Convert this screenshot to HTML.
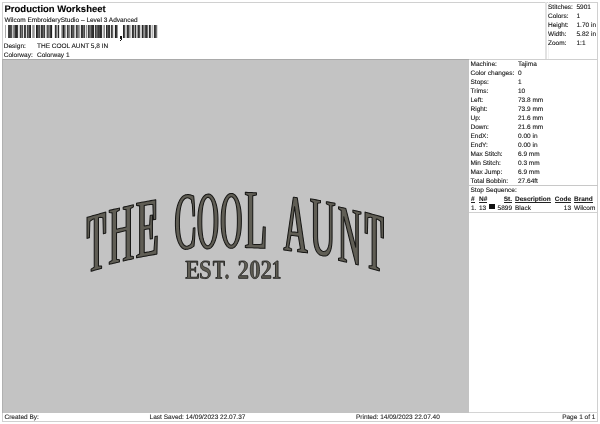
<!DOCTYPE html>
<html><head><meta charset="utf-8"><style>
html,body{margin:0;padding:0;background:#fff;width:600px;height:424px;overflow:hidden}
body{position:relative;font-family:"Liberation Sans",sans-serif;text-rendering:geometricPrecision}
.t{position:absolute;white-space:nowrap;line-height:1;-webkit-text-stroke:0.1px currentColor}
.r{position:absolute}
svg{position:absolute;left:0;top:0}
</style></head><body>
<div id="ui" style="position:absolute;left:0;top:0;width:600px;height:424px;filter:grayscale(1)">
<div class="r" style="left:2px;top:2px;width:596px;height:1px;background:#d0d0d0;"></div>
<div class="r" style="left:2px;top:2px;width:1px;height:420px;background:#d0d0d0;"></div>
<div class="r" style="left:597px;top:2px;width:1px;height:420px;background:#d0d0d0;"></div>
<div class="r" style="left:2px;top:421px;width:596px;height:1px;background:#d0d0d0;"></div>
<div class="r" style="left:545px;top:2px;width:2px;height:57px;background:#e2e2e2;"></div>
<div class="r" style="left:548px;top:2px;width:1px;height:57px;background:#f2f2f2;"></div>
<div class="r" style="left:2px;top:59px;width:467px;height:354px;background:#c3c3c3;"></div>
<div class="r" style="left:2px;top:59px;width:467px;height:1px;background:#a9a9a9;"></div>
<div class="r" style="left:2px;top:59px;width:1px;height:354px;background:#b0b0b0;"></div>
<div class="r" style="left:469px;top:59px;width:129px;height:1px;background:#cfcfcf;"></div>
<div class="t" style="left:4.50px;top:4.86px;font-size:9.5px;font-weight:bold;color:#000;">Production Worksheet</div>
<div class="t" style="left:4.40px;top:17.90px;font-size:6.5px;font-weight:normal;color:#111;">Wilcom EmbroideryStudio – Level 3 Advanced</div>
<div class="t" style="left:3.80px;top:43.70px;font-size:6.5px;font-weight:normal;color:#111;">Design:</div>
<div class="t" style="left:37.00px;top:43.70px;font-size:6.5px;font-weight:normal;color:#111;">THE COOL AUNT 5,8 IN</div>
<div class="t" style="left:3.80px;top:52.70px;font-size:6.5px;font-weight:normal;color:#111;">Colorway:</div>
<div class="t" style="left:37.00px;top:52.70px;font-size:6.5px;font-weight:normal;color:#111;">Colorway 1</div>
<div class="t" style="left:548.00px;top:4.80px;font-size:6.5px;font-weight:normal;color:#111;">Stitches:</div>
<div class="t" style="left:576.50px;top:4.80px;font-size:6.5px;font-weight:normal;color:#111;">5901</div>
<div class="t" style="left:548.00px;top:13.80px;font-size:6.5px;font-weight:normal;color:#111;">Colors:</div>
<div class="t" style="left:576.50px;top:13.80px;font-size:6.5px;font-weight:normal;color:#111;">1</div>
<div class="t" style="left:548.00px;top:22.80px;font-size:6.5px;font-weight:normal;color:#111;">Height:</div>
<div class="t" style="left:576.50px;top:22.80px;font-size:6.5px;font-weight:normal;color:#111;">1.70 in</div>
<div class="t" style="left:548.00px;top:31.80px;font-size:6.5px;font-weight:normal;color:#111;">Width:</div>
<div class="t" style="left:576.50px;top:31.80px;font-size:6.5px;font-weight:normal;color:#111;">5.82 in</div>
<div class="t" style="left:548.00px;top:40.80px;font-size:6.5px;font-weight:normal;color:#111;">Zoom:</div>
<div class="t" style="left:576.50px;top:40.80px;font-size:6.5px;font-weight:normal;color:#111;">1:1</div>
<div class="t" style="left:470.50px;top:61.70px;font-size:6.5px;font-weight:normal;color:#111;">Machine:</div>
<div class="t" style="left:518.00px;top:61.70px;font-size:6.5px;font-weight:normal;color:#111;">Tajima</div>
<div class="t" style="left:470.50px;top:70.70px;font-size:6.5px;font-weight:normal;color:#111;">Color changes:</div>
<div class="t" style="left:518.00px;top:70.70px;font-size:6.5px;font-weight:normal;color:#111;">0</div>
<div class="t" style="left:470.50px;top:79.70px;font-size:6.5px;font-weight:normal;color:#111;">Stops:</div>
<div class="t" style="left:518.00px;top:79.70px;font-size:6.5px;font-weight:normal;color:#111;">1</div>
<div class="t" style="left:470.50px;top:88.70px;font-size:6.5px;font-weight:normal;color:#111;">Trims:</div>
<div class="t" style="left:518.00px;top:88.70px;font-size:6.5px;font-weight:normal;color:#111;">10</div>
<div class="t" style="left:470.50px;top:97.70px;font-size:6.5px;font-weight:normal;color:#111;">Left:</div>
<div class="t" style="left:518.00px;top:97.70px;font-size:6.5px;font-weight:normal;color:#111;">73.8 mm</div>
<div class="t" style="left:470.50px;top:106.70px;font-size:6.5px;font-weight:normal;color:#111;">Right:</div>
<div class="t" style="left:518.00px;top:106.70px;font-size:6.5px;font-weight:normal;color:#111;">73.9 mm</div>
<div class="t" style="left:470.50px;top:115.70px;font-size:6.5px;font-weight:normal;color:#111;">Up:</div>
<div class="t" style="left:518.00px;top:115.70px;font-size:6.5px;font-weight:normal;color:#111;">21.6 mm</div>
<div class="t" style="left:470.50px;top:124.70px;font-size:6.5px;font-weight:normal;color:#111;">Down:</div>
<div class="t" style="left:518.00px;top:124.70px;font-size:6.5px;font-weight:normal;color:#111;">21.6 mm</div>
<div class="t" style="left:470.50px;top:133.70px;font-size:6.5px;font-weight:normal;color:#111;">EndX:</div>
<div class="t" style="left:518.00px;top:133.70px;font-size:6.5px;font-weight:normal;color:#111;">0.00 in</div>
<div class="t" style="left:470.50px;top:142.70px;font-size:6.5px;font-weight:normal;color:#111;">EndY:</div>
<div class="t" style="left:518.00px;top:142.70px;font-size:6.5px;font-weight:normal;color:#111;">0.00 in</div>
<div class="t" style="left:470.50px;top:151.70px;font-size:6.5px;font-weight:normal;color:#111;">Max Stitch:</div>
<div class="t" style="left:518.00px;top:151.70px;font-size:6.5px;font-weight:normal;color:#111;">6.9 mm</div>
<div class="t" style="left:470.50px;top:160.70px;font-size:6.5px;font-weight:normal;color:#111;">Min Stitch:</div>
<div class="t" style="left:518.00px;top:160.70px;font-size:6.5px;font-weight:normal;color:#111;">0.3 mm</div>
<div class="t" style="left:470.50px;top:169.70px;font-size:6.5px;font-weight:normal;color:#111;">Max Jump:</div>
<div class="t" style="left:518.00px;top:169.70px;font-size:6.5px;font-weight:normal;color:#111;">6.9 mm</div>
<div class="t" style="left:470.50px;top:178.70px;font-size:6.5px;font-weight:normal;color:#111;">Total Bobbin:</div>
<div class="t" style="left:518.00px;top:178.70px;font-size:6.5px;font-weight:normal;color:#111;">27.64ft</div>
<div class="r" style="left:469px;top:185px;width:129px;height:1px;background:#c8c8c8;"></div>
<div class="t" style="left:470.50px;top:187.90px;font-size:6.5px;font-weight:normal;color:#111;">Stop Sequence:</div>
<div class="t" style="left:471.00px;top:197.40px;font-size:6.5px;font-weight:bold;color:#222;height:4.90px;border-bottom:0.9px solid #222;">#</div>
<div class="t" style="left:479.00px;top:197.40px;font-size:6.5px;font-weight:bold;color:#222;height:4.90px;border-bottom:0.9px solid #222;">N#</div>
<div class="t" style="right:88.00px;top:197.40px;font-size:6.5px;font-weight:bold;color:#222;height:4.90px;border-bottom:0.9px solid #222;">St.</div>
<div class="t" style="left:515.00px;top:197.40px;font-size:6.5px;font-weight:bold;color:#222;height:4.90px;border-bottom:0.9px solid #222;">Description</div>
<div class="t" style="right:29.00px;top:197.40px;font-size:6.5px;font-weight:bold;color:#222;height:4.90px;border-bottom:0.9px solid #222;">Code</div>
<div class="t" style="left:574.00px;top:197.40px;font-size:6.5px;font-weight:bold;color:#222;height:4.90px;border-bottom:0.9px solid #222;">Brand</div>
<div class="t" style="left:471.00px;top:205.90px;font-size:6.5px;font-weight:normal;color:#111;">1.</div>
<div class="t" style="left:479.00px;top:205.90px;font-size:6.5px;font-weight:normal;color:#111;">13</div>
<div class="r" style="left:489px;top:204px;width:6px;height:5px;background:#111;"></div>
<div class="t" style="right:88.00px;top:205.90px;font-size:6.5px;font-weight:normal;color:#111;">5899</div>
<div class="t" style="left:515.00px;top:205.90px;font-size:6.5px;font-weight:normal;color:#111;">Black</div>
<div class="t" style="right:29.00px;top:205.90px;font-size:6.5px;font-weight:normal;color:#111;">13</div>
<div class="t" style="left:574.00px;top:205.90px;font-size:6.5px;font-weight:normal;color:#111;">Wilcom</div>
<div class="r" style="left:469px;top:212px;width:129px;height:1px;background:#d0d0d0;"></div>
<div class="r" style="left:469px;top:412px;width:129px;height:1px;background:#d4d4d4;"></div>
<div class="t" style="left:4.50px;top:414.90px;font-size:6.5px;font-weight:normal;color:#222;">Created By:</div>
<div class="t" style="left:149.60px;top:414.90px;font-size:6.5px;font-weight:normal;color:#222;">Last Saved: 14/09/2023 22.07.37</div>
<div class="t" style="left:356.00px;top:414.90px;font-size:6.5px;font-weight:normal;color:#222;">Printed: 14/09/2023 22.07.40</div>
<div class="t" style="right:4.60px;top:414.90px;font-size:6.5px;font-weight:normal;color:#222;">Page 1 of 1</div>
<svg width="600" height="60" style="position:absolute;left:0;top:0" shape-rendering="crispEdges"><rect x="5" y="25" width="1" height="13" fill="#aaaaaa"/><rect x="8" y="25" width="1" height="13" fill="#464646"/><rect x="9" y="25" width="1" height="13" fill="#3c3c3c"/><rect x="10" y="25" width="1" height="13" fill="#464646"/><rect x="11" y="25" width="1" height="13" fill="#505050"/><rect x="12" y="25" width="1" height="13" fill="#c8c8c8"/><rect x="13" y="25" width="1" height="13" fill="#8c8c8c"/><rect x="14" y="25" width="1" height="13" fill="#787878"/><rect x="15" y="25" width="1" height="13" fill="#323232"/><rect x="16" y="25" width="1" height="13" fill="#282828"/><rect x="17" y="25" width="1" height="13" fill="#3c3c3c"/><rect x="18" y="25" width="1" height="13" fill="#e6e6e6"/><rect x="19" y="25" width="1" height="13" fill="#c8c8c8"/><rect x="20" y="25" width="1" height="13" fill="#3c3c3c"/><rect x="21" y="25" width="1" height="13" fill="#787878"/><rect x="22" y="25" width="1" height="13" fill="#505050"/><rect x="23" y="25" width="1" height="13" fill="#e6e6e6"/><rect x="24" y="25" width="1" height="13" fill="#3c3c3c"/><rect x="25" y="25" width="1" height="13" fill="#464646"/><rect x="26" y="25" width="1" height="13" fill="#dcdcdc"/><rect x="27" y="25" width="1" height="13" fill="#464646"/><rect x="28" y="25" width="1" height="13" fill="#6e6e6e"/><rect x="29" y="25" width="1" height="13" fill="#3c3c3c"/><rect x="30" y="25" width="1" height="13" fill="#1e1e1e"/><rect x="32" y="25" width="1" height="13" fill="#aaaaaa"/><rect x="33" y="25" width="1" height="13" fill="#969696"/><rect x="34" y="25" width="1" height="13" fill="#b4b4b4"/><rect x="36" y="25" width="1" height="13" fill="#1e1e1e"/><rect x="37" y="25" width="1" height="13" fill="#3c3c3c"/><rect x="38" y="25" width="1" height="13" fill="#646464"/><rect x="39" y="25" width="1" height="13" fill="#505050"/><rect x="40" y="25" width="1" height="13" fill="#c8c8c8"/><rect x="41" y="25" width="1" height="13" fill="#323232"/><rect x="42" y="25" width="1" height="13" fill="#464646"/><rect x="43" y="25" width="1" height="13" fill="#6e6e6e"/><rect x="44" y="25" width="1" height="13" fill="#3c3c3c"/><rect x="45" y="25" width="1" height="13" fill="#e6e6e6"/><rect x="46" y="25" width="1" height="13" fill="#b4b4b4"/><rect x="47" y="25" width="1" height="13" fill="#505050"/><rect x="48" y="25" width="1" height="13" fill="#6e6e6e"/><rect x="49" y="25" width="1" height="13" fill="#828282"/><rect x="50" y="25" width="1" height="13" fill="#3c3c3c"/><rect x="51" y="25" width="1" height="13" fill="#1e1e1e"/><rect x="52" y="25" width="1" height="13" fill="#e6e6e6"/><rect x="54" y="25" width="1" height="13" fill="#dcdcdc"/><rect x="55" y="25" width="1" height="13" fill="#323232"/><rect x="56" y="25" width="1" height="13" fill="#787878"/><rect x="57" y="25" width="1" height="13" fill="#b4b4b4"/><rect x="58" y="25" width="1" height="13" fill="#282828"/><rect x="59" y="25" width="1" height="13" fill="#dcdcdc"/><rect x="61" y="25" width="1" height="13" fill="#aaaaaa"/><rect x="62" y="25" width="1" height="13" fill="#787878"/><rect x="63" y="25" width="1" height="13" fill="#1e1e1e"/><rect x="64" y="25" width="1" height="13" fill="#646464"/><rect x="65" y="25" width="1" height="13" fill="#a0a0a0"/><rect x="66" y="25" width="1" height="13" fill="#e6e6e6"/><rect x="67" y="25" width="1" height="13" fill="#3c3c3c"/><rect x="68" y="25" width="1" height="13" fill="#6e6e6e"/><rect x="69" y="25" width="1" height="13" fill="#828282"/><rect x="70" y="25" width="1" height="13" fill="#dcdcdc"/><rect x="71" y="25" width="1" height="13" fill="#282828"/><rect x="72" y="25" width="1" height="13" fill="#5a5a5a"/><rect x="73" y="25" width="1" height="13" fill="#505050"/><rect x="74" y="25" width="1" height="13" fill="#aaaaaa"/><rect x="75" y="25" width="1" height="13" fill="#dcdcdc"/><rect x="76" y="25" width="1" height="13" fill="#3c3c3c"/><rect x="77" y="25" width="1" height="13" fill="#646464"/><rect x="78" y="25" width="1" height="13" fill="#828282"/><rect x="79" y="25" width="1" height="13" fill="#a0a0a0"/><rect x="80" y="25" width="1" height="13" fill="#e6e6e6"/><rect x="81" y="25" width="1" height="13" fill="#323232"/><rect x="82" y="25" width="1" height="13" fill="#3c3c3c"/><rect x="83" y="25" width="1" height="13" fill="#6e6e6e"/><rect x="84" y="25" width="1" height="13" fill="#464646"/><rect x="85" y="25" width="1" height="13" fill="#e6e6e6"/><rect x="86" y="25" width="1" height="13" fill="#8c8c8c"/><rect x="87" y="25" width="1" height="13" fill="#dcdcdc"/><rect x="88" y="25" width="1" height="13" fill="#3c3c3c"/><rect x="89" y="25" width="1" height="13" fill="#646464"/><rect x="90" y="25" width="1" height="13" fill="#787878"/><rect x="91" y="25" width="1" height="13" fill="#464646"/><rect x="92" y="25" width="1" height="13" fill="#323232"/><rect x="93" y="25" width="1" height="13" fill="#282828"/><rect x="94" y="25" width="1" height="13" fill="#e6e6e6"/><rect x="95" y="25" width="1" height="13" fill="#3c3c3c"/><rect x="96" y="25" width="1" height="13" fill="#6e6e6e"/><rect x="97" y="25" width="1" height="13" fill="#5a5a5a"/><rect x="98" y="25" width="1" height="13" fill="#3c3c3c"/><rect x="99" y="25" width="1" height="13" fill="#464646"/><rect x="100" y="25" width="1" height="13" fill="#282828"/><rect x="101" y="25" width="1" height="13" fill="#323232"/><rect x="102" y="25" width="1" height="13" fill="#e6e6e6"/><rect x="103" y="25" width="1" height="13" fill="#b4b4b4"/><rect x="104" y="25" width="1" height="13" fill="#8c8c8c"/><rect x="106" y="25" width="1" height="13" fill="#282828"/><rect x="107" y="25" width="1" height="13" fill="#646464"/><rect x="108" y="25" width="1" height="13" fill="#3c3c3c"/><rect x="109" y="25" width="1" height="13" fill="#323232"/><rect x="110" y="25" width="1" height="13" fill="#e6e6e6"/><rect x="111" y="25" width="1" height="13" fill="#3c3c3c"/><rect x="112" y="25" width="1" height="13" fill="#646464"/><rect x="113" y="25" width="1" height="13" fill="#dcdcdc"/><rect x="114" y="25" width="1" height="13" fill="#e6e6e6"/><rect x="115" y="25" width="1" height="13" fill="#1e1e1e"/><rect x="116" y="25" width="1" height="13" fill="#3c3c3c"/><rect x="117" y="25" width="1" height="13" fill="#969696"/><rect x="123" y="25" width="1" height="13" fill="#282828"/><rect x="124" y="25" width="1" height="13" fill="#505050"/><rect x="125" y="25" width="1" height="13" fill="#c8c8c8"/><rect x="126" y="25" width="1" height="13" fill="#bebebe"/><rect x="127" y="25" width="1" height="13" fill="#323232"/><rect x="128" y="25" width="1" height="13" fill="#464646"/><rect x="129" y="25" width="1" height="13" fill="#969696"/><rect x="130" y="25" width="1" height="13" fill="#bebebe"/><rect x="131" y="25" width="1" height="13" fill="#e6e6e6"/><rect x="132" y="25" width="1" height="13" fill="#323232"/><rect x="133" y="25" width="1" height="13" fill="#464646"/><rect x="134" y="25" width="1" height="13" fill="#aaaaaa"/><rect x="135" y="25" width="1" height="13" fill="#323232"/><rect x="136" y="25" width="1" height="13" fill="#c8c8c8"/><rect x="137" y="25" width="1" height="13" fill="#969696"/><rect x="138" y="25" width="1" height="13" fill="#323232"/><rect x="139" y="25" width="1" height="13" fill="#505050"/><rect x="140" y="25" width="1" height="13" fill="#d2d2d2"/><rect x="141" y="25" width="1" height="13" fill="#c8c8c8"/><rect x="142" y="25" width="1" height="13" fill="#282828"/><rect x="143" y="25" width="1" height="13" fill="#787878"/><rect x="144" y="25" width="1" height="13" fill="#969696"/><rect x="145" y="25" width="1" height="13" fill="#464646"/><rect x="146" y="25" width="1" height="13" fill="#323232"/><rect x="147" y="25" width="1" height="13" fill="#6e6e6e"/><rect x="148" y="25" width="1" height="13" fill="#dcdcdc"/><rect x="149" y="25" width="1" height="13" fill="#282828"/><rect x="150" y="25" width="1" height="13" fill="#5a5a5a"/><rect x="151" y="25" width="1" height="13" fill="#dcdcdc"/><rect x="152" y="25" width="1" height="13" fill="#b4b4b4"/><rect x="153" y="25" width="1" height="13" fill="#e6e6e6"/><rect x="154" y="25" width="1" height="13" fill="#323232"/><rect x="155" y="25" width="1" height="13" fill="#464646"/><rect x="156" y="25" width="1" height="13" fill="#787878"/><rect x="157" y="25" width="1" height="13" fill="#dcdcdc"/><path d="M120.2,36.2 L122.2,36.2 L122.2,38.6 L120.8,41 L120.2,40.6 L120.9,38.8 L120.2,38.8 Z" fill="#111"/></svg>
</div>
<svg width="600" height="424" viewBox="0 0 600 424"><path d="M91.11,269.10L91.11,270.18L91.11,271.27L91.46,271.17L91.81,271.07L92.16,270.97L92.51,270.88L94.44,270.33L96.36,269.79L98.29,269.24L100.21,268.70L100.56,268.60L100.91,268.50L101.26,268.40L101.61,268.30L101.61,267.21L101.61,266.12L100.05,266.01L98.48,265.90L98.48,264.81L98.48,263.71L98.48,262.62L98.48,261.52L98.48,260.43L98.48,259.34L98.48,258.24L98.48,257.15L98.48,256.05L98.48,254.96L98.48,253.87L98.48,252.77L98.48,251.68L98.48,250.58L98.48,249.49L98.48,248.39L98.48,247.30L98.48,246.21L98.48,245.11L98.48,244.02L98.48,242.92L98.48,241.83L98.48,240.73L98.48,239.64L98.48,238.55L98.48,237.45L98.48,236.36L98.48,235.26L98.48,234.17L98.48,233.08L98.48,231.98L98.48,230.89L98.48,229.79L98.48,228.70L98.48,227.60L98.48,226.51L98.48,225.42L98.48,224.32L98.48,223.23L98.48,222.13L98.48,221.04L98.48,219.95L98.48,218.85L98.48,217.76L98.50,217.75L98.84,217.67L99.17,217.59L99.50,217.52L99.82,217.45L100.14,217.39L100.45,217.34L100.75,217.55L101.05,217.54L101.34,217.55L101.60,217.56L101.85,217.58L102.07,217.61L102.28,217.64L102.46,217.69L102.62,217.74L102.76,217.80L102.88,217.87L102.98,217.95L103.00,219.00L103.03,220.05L103.06,221.10L103.08,222.16L103.11,223.21L103.14,224.26L103.16,225.31L103.19,226.36L103.22,227.42L103.24,228.47L103.27,229.52L103.30,230.57L103.32,231.62L103.35,232.68L103.38,233.73L103.73,233.63L104.08,233.53L104.37,233.44L104.43,233.43L104.72,233.35L104.78,233.33L105.07,233.25L105.42,233.15L105.77,233.05L105.77,232.00L105.77,230.95L105.77,229.90L105.77,228.85L105.77,227.80L105.77,226.75L105.77,225.71L105.77,224.66L105.77,223.61L105.77,222.56L105.77,221.51L105.77,220.46L105.77,219.41L105.77,218.36L105.77,217.31L105.77,216.27L105.77,215.22L105.77,214.17L105.77,213.12L105.77,212.07L105.42,212.17L105.07,212.27L104.72,212.37L104.37,212.47L102.38,213.03L100.39,213.60L98.39,214.16L96.40,214.72L94.41,215.29L92.41,215.85L90.42,216.42L88.42,216.98L88.07,217.08L87.72,217.18L87.38,217.28L87.02,217.38L87.02,218.43L87.02,219.48L87.02,220.53L87.02,221.57L87.02,222.62L87.02,223.67L87.02,224.72L87.02,225.77L87.02,226.82L87.02,227.87L87.02,228.92L87.02,229.97L87.02,231.01L87.02,232.06L87.02,233.11L87.02,234.16L87.02,235.21L87.02,236.26L87.02,237.31L87.02,238.36L87.38,238.26L87.72,238.16L88.01,238.08L88.07,238.06L88.36,237.98L88.42,237.96L88.71,237.88L89.06,237.78L89.41,237.68L89.44,236.61L89.46,235.55L89.49,234.48L89.52,233.41L89.54,232.35L89.57,231.28L89.60,230.21L89.62,229.15L89.65,228.08L89.67,227.01L89.70,225.95L89.73,224.88L89.75,223.81L89.78,222.74L89.81,221.68L90.10,221.30L90.45,220.95L90.84,220.61L91.28,220.29L91.76,219.98L92.29,219.55L92.87,219.33L93.50,219.11L94.17,218.89L94.24,218.87L94.24,219.97L94.24,221.07L94.24,222.16L94.24,223.26L94.24,224.35L94.24,225.45L94.24,226.55L94.24,227.64L94.24,228.74L94.24,229.83L94.24,230.93L94.24,232.03L94.24,233.12L94.24,234.22L94.24,235.31L94.24,236.41L94.24,237.51L94.24,238.60L94.24,239.70L94.24,240.80L94.24,241.89L94.24,242.99L94.24,244.08L94.24,245.18L94.24,246.28L94.24,247.37L94.24,248.47L94.24,249.56L94.24,250.66L94.24,251.76L94.24,252.85L94.24,253.95L94.24,255.04L94.24,256.14L94.24,257.24L94.24,258.33L94.24,259.43L94.24,260.52L94.24,261.62L94.24,262.72L94.24,263.81L94.24,264.91L94.24,266.01L94.24,267.10L92.68,268.10ZM109.23,212.51L110.68,212.70L112.14,212.88L112.14,213.94L112.14,214.99L112.14,216.05L112.14,217.10L112.14,218.16L112.14,219.21L112.14,220.27L112.14,221.33L112.14,222.38L112.14,223.44L112.14,224.49L112.14,225.55L112.14,226.60L112.14,227.66L112.14,228.72L112.14,229.77L112.14,230.83L112.14,231.88L112.14,232.94L112.14,234.00L112.14,235.05L112.14,236.11L112.14,237.16L112.14,238.22L112.14,239.27L112.14,240.33L112.14,241.39L112.14,242.44L112.14,243.50L112.14,244.55L112.14,245.61L112.14,246.66L112.14,247.72L112.14,248.78L112.14,249.83L112.14,250.89L112.14,251.94L112.14,253.00L112.14,254.05L112.14,255.11L112.14,256.17L112.14,257.22L112.14,258.28L112.14,259.33L112.14,260.39L110.68,261.27L109.23,262.15L109.23,263.22L109.23,264.28L109.50,264.22L109.78,264.15L110.05,264.09L110.33,264.03L111.93,263.65L113.53,263.28L115.13,262.91L116.73,262.54L118.33,262.17L118.60,262.10L118.88,262.04L119.15,261.97L119.43,261.91L119.43,260.85L119.43,259.78L117.97,259.58L116.51,259.37L116.51,258.31L116.51,257.25L116.51,256.19L116.51,255.13L116.51,254.07L116.51,253.01L116.51,251.94L116.51,250.88L116.51,249.82L116.51,248.76L116.51,247.70L116.51,246.64L116.51,245.58L116.51,244.52L116.51,243.46L116.51,242.39L116.51,241.33L116.51,240.27L116.51,239.21L116.51,238.15L116.51,237.09L116.51,236.03L116.51,234.97L116.51,233.91L116.51,232.84L118.43,232.40L120.35,231.95L122.27,231.51L124.19,231.06L126.11,230.61L126.11,231.68L126.11,232.74L126.11,233.80L126.11,234.86L126.11,235.92L126.11,236.98L126.11,238.04L126.11,239.10L126.11,240.16L126.11,241.23L126.11,242.29L126.11,243.35L126.11,244.41L126.11,245.47L126.11,246.53L126.11,247.59L126.11,248.65L126.11,249.71L126.11,250.78L126.11,251.84L126.11,252.90L126.11,253.96L126.11,255.02L126.11,256.08L126.11,257.14L124.65,258.02L123.19,258.91L123.19,259.97L123.19,261.04L123.47,260.97L123.74,260.91L124.02,260.84L124.29,260.78L126.29,260.32L128.28,259.85L130.28,259.39L132.28,258.92L132.55,258.86L132.83,258.80L133.10,258.73L133.38,258.67L133.38,257.60L133.38,256.54L131.92,256.33L130.46,256.13L130.46,255.07L130.46,254.02L130.46,252.96L130.46,251.91L130.46,250.85L130.46,249.80L130.46,248.74L130.46,247.68L130.46,246.63L130.46,245.57L130.46,244.52L130.46,243.46L130.46,242.41L130.46,241.35L130.46,240.29L130.46,239.24L130.46,238.18L130.46,237.13L130.46,236.07L130.46,235.01L130.46,233.96L130.46,232.90L130.46,231.85L130.46,230.79L130.46,229.74L130.46,228.68L130.46,227.62L130.46,226.57L130.46,225.51L130.46,224.46L130.46,223.40L130.46,222.35L130.46,221.29L130.46,220.23L130.46,219.18L130.46,218.12L130.46,217.07L130.46,216.01L130.46,214.96L130.46,213.90L130.46,212.84L130.46,211.79L130.46,210.73L130.46,209.68L130.46,208.62L131.92,207.76L133.38,206.90L133.38,205.83L133.38,204.77L133.10,204.83L132.83,204.90L132.55,204.96L132.28,205.02L130.28,205.49L128.28,205.95L126.29,206.42L124.29,206.88L124.02,206.94L123.74,207.01L123.47,207.07L123.19,207.14L123.19,208.20L123.19,209.27L124.65,209.45L126.11,209.63L126.11,210.65L126.11,211.68L126.11,212.70L126.11,213.72L126.11,214.74L126.11,215.76L126.11,216.78L126.11,217.80L126.11,218.83L126.11,219.85L126.11,220.87L126.11,221.89L126.11,222.91L126.11,223.93L126.11,224.95L126.11,225.98L126.11,227.00L124.19,227.44L122.27,227.89L120.35,228.34L118.43,228.78L116.51,229.23L116.51,228.21L116.51,227.18L116.51,226.16L116.51,225.14L116.51,224.12L116.51,223.10L116.51,222.08L116.51,221.06L116.51,220.03L116.51,219.01L116.51,217.99L116.51,216.97L116.51,215.95L116.51,214.93L116.51,213.91L116.51,212.89L116.51,211.86L117.97,211.00L119.43,210.14L119.43,209.08L119.43,208.01L119.15,208.07L118.88,208.14L118.60,208.20L118.33,208.27L116.73,208.64L115.13,209.01L113.53,209.38L111.93,209.75L110.33,210.13L110.05,210.19L109.78,210.25L109.50,210.32L109.23,210.38L109.23,211.45ZM136.52,205.37L138.08,205.62L139.63,205.87L139.63,206.94L139.63,208.00L139.63,209.07L139.63,210.14L139.63,211.21L139.63,212.28L139.63,213.35L139.63,214.42L139.63,215.48L139.63,216.55L139.63,217.62L139.63,218.69L139.63,219.76L139.63,220.83L139.63,221.89L139.63,222.96L139.63,224.03L139.63,225.10L139.63,226.17L139.63,227.24L139.63,228.31L139.63,229.37L139.63,230.44L139.63,231.51L139.63,232.58L139.63,233.65L139.63,234.72L139.63,235.79L139.63,236.85L139.63,237.92L139.63,238.99L139.63,240.06L139.63,241.13L139.63,242.20L139.63,243.26L139.63,244.33L139.63,245.40L139.63,246.47L139.63,247.54L139.63,248.61L139.63,249.68L139.63,250.74L139.63,251.81L139.63,252.88L139.63,253.95L138.08,254.78L136.52,255.61L136.52,256.68L136.52,257.76L136.80,257.71L137.07,257.66L137.35,257.61L137.62,257.56L139.45,257.24L141.27,256.91L143.09,256.58L144.91,256.25L146.73,255.92L148.55,255.60L150.37,255.27L152.19,254.94L154.01,254.61L155.83,254.28L156.11,254.23L156.38,254.18L156.66,254.13L156.93,254.09L156.95,253.03L156.97,251.97L156.99,250.92L157.01,249.86L157.03,248.80L157.05,247.75L157.07,246.69L157.09,245.63L157.11,244.58L157.13,243.52L157.15,242.46L157.17,241.41L157.19,240.35L157.21,239.29L157.23,238.24L157.25,237.18L157.28,236.12L157.00,236.17L156.73,236.22L156.45,236.27L156.18,236.32L156.09,236.34L155.81,236.39L155.54,236.44L155.26,236.49L154.99,236.54L154.91,237.60L154.83,238.66L154.75,239.72L154.67,240.77L154.59,241.83L154.51,242.89L154.43,243.95L154.35,245.01L154.27,246.07L154.19,247.13L154.12,248.19L154.04,249.25L153.96,250.31L153.64,250.49L153.25,250.67L152.80,250.85L152.29,251.03L151.71,251.20L151.07,251.38L150.37,251.55L149.60,251.72L148.76,251.89L147.86,252.06L146.03,252.39L144.21,252.72L144.21,251.67L144.21,250.62L144.21,249.57L144.21,248.52L144.21,247.48L144.21,246.43L144.21,245.38L144.21,244.33L144.21,243.28L144.21,242.23L144.21,241.19L144.21,240.14L144.21,239.09L144.21,238.04L144.21,236.99L144.21,235.94L144.21,234.89L144.21,233.85L144.21,232.80L144.21,231.75L144.21,230.70L144.21,229.65L146.01,229.33L147.82,229.00L149.63,228.68L149.69,229.71L149.74,230.75L149.80,231.78L149.85,232.82L149.91,233.85L149.97,234.89L150.02,235.92L150.08,236.96L150.13,237.99L150.19,239.03L150.46,238.98L150.74,238.93L151.01,238.88L151.29,238.83L151.34,238.82L151.62,238.77L151.89,238.72L152.17,238.67L152.44,238.62L152.44,237.55L152.44,236.48L152.44,235.41L152.44,234.33L152.44,233.26L152.44,232.19L152.44,231.12L152.44,230.04L152.44,228.97L152.44,227.90L152.44,226.83L152.44,225.75L152.44,224.68L152.44,223.61L152.44,222.54L152.44,221.46L152.44,220.39L152.44,219.32L152.44,218.25L152.44,217.17L152.44,216.10L152.44,215.03L152.17,215.08L151.89,215.13L151.62,215.18L151.34,215.23L151.29,215.24L151.01,215.29L150.74,215.34L150.46,215.39L150.19,215.44L150.13,216.50L150.07,217.56L150.00,218.63L149.94,219.69L149.88,220.76L149.82,221.82L149.76,222.89L149.69,223.95L149.63,225.01L147.82,225.34L146.01,225.67L144.21,225.99L144.21,224.91L144.21,223.83L144.21,222.75L144.21,221.68L144.21,220.60L144.21,219.52L144.21,218.44L144.21,217.36L144.21,216.28L144.21,215.20L144.21,214.12L144.21,213.04L144.21,211.96L144.21,210.89L144.21,209.81L144.21,208.73L144.21,207.65L144.21,206.57L144.21,205.49L145.63,205.23L147.05,204.98L147.80,204.85L148.51,204.74L149.18,204.64L149.82,204.57L150.42,204.51L150.99,204.47L151.52,204.45L152.01,204.45L152.47,204.47L152.89,204.58L152.94,205.66L152.98,206.75L153.02,207.83L153.06,208.91L153.10,209.99L153.14,211.07L153.18,212.15L153.22,213.24L153.26,214.32L153.31,215.40L153.35,216.48L153.39,217.56L153.43,218.64L153.47,219.73L153.75,219.68L154.02,219.63L154.30,219.58L154.57,219.53L154.66,219.51L154.94,219.46L155.21,219.41L155.49,219.36L155.76,219.31L155.76,218.23L155.76,217.14L155.76,216.05L155.76,214.96L155.76,213.88L155.76,212.79L155.76,211.70L155.76,210.62L155.76,209.53L155.76,208.44L155.76,207.36L155.76,206.27L155.76,205.18L155.76,204.09L155.76,203.01L155.76,201.92L155.76,200.83L155.76,199.75L155.49,199.80L155.21,199.85L154.94,199.89L154.66,199.94L152.77,200.29L150.87,200.63L148.98,200.97L147.09,201.31L145.20,201.65L143.30,201.99L141.41,202.33L139.52,202.67L137.62,203.01L137.35,203.06L137.07,203.11L136.80,203.16L136.52,203.21L136.52,204.29ZM185.54,194.85L184.63,195.16L183.76,195.60L182.92,196.18L182.12,196.89L181.35,197.75L180.61,198.74L180.26,199.31L179.90,199.87L179.57,200.50L179.23,201.14L178.92,201.84L178.60,202.54L178.31,203.31L178.01,204.08L177.75,204.91L177.48,205.75L177.24,206.64L177.00,207.54L176.78,208.50L176.57,209.46L176.39,210.49L176.22,211.51L176.07,212.60L175.92,213.69L175.85,214.45L175.77,215.22L175.70,215.99L175.65,216.80L175.60,217.61L175.54,218.42L175.51,219.27L175.48,220.12L175.45,220.98L175.44,221.87L175.43,222.77L175.43,223.66L175.43,224.49L175.45,225.31L175.46,226.14L175.49,226.93L175.52,227.72L175.55,228.50L175.61,229.25L175.66,230.00L175.72,230.75L175.83,231.81L175.95,232.87L176.10,233.87L176.25,234.87L176.43,235.81L176.62,236.75L176.84,237.63L177.05,238.51L177.30,239.33L177.55,240.15L177.83,240.92L178.10,241.68L178.41,242.38L178.71,243.08L179.03,243.72L179.36,244.35L179.70,244.92L180.04,245.48L180.39,245.98L180.74,246.47L181.48,247.31L182.23,248.01L183.01,248.56L183.82,248.97L184.66,249.24L185.53,249.36L186.44,249.34L186.53,249.32L186.57,249.32L186.66,249.31L186.70,249.31L186.80,249.30L186.84,249.30L186.93,249.28L186.97,249.28L187.69,249.18L188.40,249.04L189.11,248.84L189.81,248.59L190.51,248.29L191.21,247.95L191.91,247.55L192.61,247.10L193.31,246.61L194.01,246.06L194.12,244.98L194.22,243.90L194.32,242.82L194.41,241.75L194.48,240.67L194.56,239.60L194.62,238.52L194.68,237.45L194.73,236.37L194.77,235.30L194.81,234.23L194.85,233.16L194.88,232.09L194.90,231.02L194.92,229.95L194.94,228.88L194.96,227.81L194.81,227.83L194.66,227.84L194.51,227.86L194.36,227.87L193.91,227.92L193.76,227.93L193.61,227.95L193.46,227.96L193.31,227.98L193.24,229.05L193.18,230.12L193.11,231.20L193.04,232.27L192.97,233.35L192.89,234.42L192.81,235.49L192.73,236.57L192.64,237.64L192.54,238.72L192.45,239.80L192.23,240.35L192.00,240.88L191.77,241.39L191.61,242.24L191.45,243.10L191.20,243.42L190.94,243.73L190.66,244.03L190.37,244.32L190.08,244.59L189.77,244.85L189.45,245.09L189.14,245.30L188.82,245.50L188.50,245.67L188.17,245.83L187.85,245.96L187.52,246.07L187.19,246.16L186.90,246.22L186.39,246.22L185.74,246.11L185.12,245.86L184.53,245.50L183.96,245.00L183.43,244.39L182.92,243.64L182.43,242.78L181.98,241.78L181.76,241.22L181.55,240.67L181.35,240.05L181.15,239.43L180.97,238.75L180.79,238.08L180.63,237.35L180.47,236.61L180.33,235.82L180.19,235.03L180.07,234.19L179.95,233.34L179.85,232.44L179.76,231.54L179.68,230.58L179.60,229.62L179.55,228.60L179.50,227.58L179.46,226.51L179.43,225.43L179.43,224.68L179.42,223.93L179.41,223.17L179.42,222.35L179.43,221.53L179.43,220.72L179.45,219.94L179.47,219.17L179.49,218.39L179.53,217.66L179.56,216.92L179.59,216.19L179.67,215.16L179.74,214.12L179.83,213.15L179.93,212.18L180.04,211.27L180.16,210.36L180.29,209.52L180.43,208.67L180.58,207.89L180.74,207.11L180.91,206.39L181.08,205.68L181.27,205.03L181.46,204.37L181.67,203.78L181.88,203.19L182.33,202.13L182.82,201.18L183.34,200.34L183.90,199.63L184.49,199.02L185.11,198.54L185.78,198.17L186.48,197.92L187.02,197.82L187.24,197.82L187.53,197.84L187.81,197.87L188.09,197.93L188.38,198.00L188.66,198.09L188.95,198.20L189.23,198.33L189.52,198.48L189.80,198.65L190.08,198.83L190.35,199.03L190.62,199.24L190.88,199.47L191.14,199.71L191.39,199.98L191.52,200.95L191.65,201.92L191.77,202.89L192.02,203.43L192.27,203.99L192.34,205.00L192.42,206.01L192.49,207.01L192.55,208.02L192.61,209.03L192.67,210.04L192.73,211.05L192.78,212.06L192.83,213.07L192.88,214.08L192.93,215.09L192.97,216.10L193.12,216.08L193.27,216.07L193.42,216.05L193.57,216.04L194.04,215.99L194.19,215.97L194.34,215.96L194.49,215.94L194.64,215.93L194.63,214.87L194.62,213.82L194.60,212.76L194.58,211.71L194.56,210.66L194.53,209.60L194.50,208.55L194.47,207.50L194.43,206.45L194.38,205.40L194.33,204.35L194.27,203.30L194.21,202.25L194.14,201.20L194.06,200.15L193.97,199.11L193.88,198.06L193.77,197.02L193.66,195.97L192.93,195.66L192.21,195.39L191.51,195.16L190.82,194.97L190.15,194.81L189.50,194.70L188.86,194.62L188.24,194.58L187.63,194.59L187.03,194.63L186.98,194.63L186.89,194.64L186.85,194.65L186.76,194.65L186.72,194.66L186.63,194.67L186.59,194.68L186.50,194.68ZM206.01,194.50L205.32,194.95L204.60,195.40L203.94,196.12L203.27,196.84L202.64,197.82L202.00,198.81L201.60,199.65L201.21,200.49L200.82,201.33L200.46,202.35L200.12,203.36L199.77,204.38L199.55,205.28L199.33,206.17L199.12,207.07L198.91,207.97L198.75,209.00L198.59,210.03L198.44,211.06L198.29,212.08L198.22,213.01L198.14,213.94L198.07,214.87L198.00,215.80L197.93,216.73L197.91,217.77L197.89,218.80L197.86,219.84L197.84,220.87L197.83,221.91L197.83,222.80L197.84,223.68L197.85,224.57L197.88,225.41L197.91,226.25L197.93,227.09L197.98,227.89L198.03,228.68L198.08,229.48L198.15,230.23L198.22,230.98L198.30,231.73L198.43,232.78L198.58,233.84L198.75,234.82L198.93,235.81L199.13,236.73L199.33,237.65L199.56,238.49L199.80,239.34L200.05,240.12L200.31,240.90L200.58,241.62L200.86,242.33L201.15,242.97L201.45,243.61L201.75,244.19L202.06,244.76L202.69,245.77L203.33,246.63L203.99,247.36L204.66,247.95L205.35,248.39L206.05,248.70L206.77,248.87L207.52,248.90L207.62,248.88L207.71,248.89L207.80,248.87L207.89,248.88L207.99,248.86L208.08,248.86L208.17,248.85L208.26,248.85L209.02,248.74L209.74,248.49L210.45,248.10L211.13,247.58L211.81,246.91L212.47,246.11L213.11,245.17L213.43,244.63L213.74,244.09L214.05,243.48L214.35,242.87L214.65,242.19L214.94,241.52L215.22,240.77L215.49,240.02L215.75,239.21L216.01,238.40L216.24,237.53L216.47,236.65L216.67,235.71L216.88,234.77L217.05,233.77L217.22,232.76L217.37,231.69L217.50,230.62L217.58,229.87L217.65,229.11L217.72,228.35L217.77,227.56L217.82,226.76L217.87,225.96L217.89,225.11L217.92,224.27L217.95,223.43L217.96,222.54L217.97,221.66L217.97,220.77L217.97,219.90L217.96,219.03L217.95,218.16L217.92,217.33L217.89,216.50L217.86,215.68L217.82,214.89L217.77,214.11L217.72,213.33L217.65,212.59L217.58,211.85L217.50,211.11L217.37,210.07L217.22,209.03L217.05,208.06L216.88,207.09L216.68,206.18L216.48,205.27L216.25,204.43L216.02,203.59L215.77,202.82L215.51,202.05L215.24,201.34L214.96,200.63L214.67,199.99L214.38,199.35L214.08,198.78L213.77,198.21L213.14,197.21L212.50,196.35L211.84,195.63L211.16,195.05L210.47,194.60L209.76,194.30L209.03,194.13L208.26,194.10L208.20,194.12L208.08,194.11L208.02,194.13L207.89,194.13L207.83,194.14L207.71,194.14L207.65,194.15L207.52,194.15ZM208.62,197.49L209.14,197.74L209.64,198.11L210.12,198.59L210.57,199.18L211.00,199.89L211.41,200.71L211.80,201.65L212.16,202.70L212.33,203.29L212.49,203.88L212.65,204.54L212.80,205.20L212.94,205.93L213.08,206.67L213.21,207.47L213.33,208.28L213.43,209.16L213.54,210.04L213.63,210.99L213.71,211.94L213.78,212.96L213.84,213.99L213.88,214.72L213.91,215.45L213.94,216.18L213.95,216.96L213.97,217.74L213.99,218.51L214.00,219.34L214.00,220.17L214.01,221.00L214.00,221.83L214.00,222.66L213.99,223.50L213.97,224.28L213.95,225.07L213.94,225.86L213.91,226.60L213.88,227.34L213.84,228.08L213.78,229.12L213.71,230.16L213.63,231.13L213.54,232.10L213.44,233.01L213.33,233.91L213.21,234.74L213.08,235.57L212.94,236.33L212.80,237.09L212.65,237.79L212.49,238.48L212.33,239.10L212.16,239.72L211.98,240.28L211.79,240.84L211.41,241.84L211.00,242.73L210.56,243.50L210.11,244.16L209.63,244.71L209.14,245.14L208.62,245.46L208.07,245.66L207.89,245.69L207.71,245.68L207.16,245.54L206.64,245.28L206.15,244.91L205.67,244.41L205.22,243.81L204.79,243.08L204.38,242.24L203.99,241.28L203.81,240.74L203.63,240.20L203.46,239.60L203.30,239.00L203.14,238.32L202.99,237.65L202.85,236.90L202.71,236.16L202.59,235.34L202.46,234.52L202.36,233.63L202.26,232.74L202.17,231.78L202.08,230.82L202.02,229.78L201.95,228.75L201.92,228.01L201.89,227.28L201.86,226.54L201.84,225.75L201.83,224.97L201.81,224.18L201.80,223.35L201.80,222.52L201.79,221.68L201.80,220.86L201.80,220.03L201.81,219.20L201.83,218.42L201.85,217.64L201.86,216.86L201.89,216.12L201.92,215.39L201.96,214.66L202.02,213.62L202.09,212.59L202.17,211.63L202.26,210.67L202.36,209.78L202.47,208.89L202.59,208.07L202.71,207.25L202.85,206.50L202.99,205.75L203.14,205.07L203.29,204.40L203.46,203.79L203.63,203.18L203.98,202.09L204.37,201.11L204.78,200.24L205.21,199.49L205.66,198.84L206.14,198.31L206.64,197.89L207.16,197.58L207.71,197.38L207.89,197.35L208.08,197.35ZM229.36,193.81L228.65,194.23L227.94,194.64L227.27,195.33L226.59,196.02L225.96,196.97L225.32,197.93L224.92,198.75L224.53,199.57L224.13,200.39L223.78,201.39L223.43,202.39L223.08,203.39L222.86,204.28L222.64,205.17L222.43,206.05L222.22,206.94L222.06,207.96L221.90,208.98L221.74,210.01L221.60,211.03L221.52,211.95L221.44,212.88L221.37,213.81L221.30,214.73L221.24,215.66L221.21,216.69L221.19,217.73L221.16,218.76L221.14,219.80L221.13,220.83L221.13,221.72L221.14,222.61L221.15,223.49L221.18,224.34L221.21,225.18L221.24,226.02L221.28,226.82L221.33,227.62L221.38,228.41L221.45,229.17L221.53,229.92L221.60,230.67L221.74,231.73L221.88,232.80L222.05,233.79L222.23,234.78L222.43,235.71L222.64,236.64L222.87,237.50L223.11,238.36L223.36,239.15L223.62,239.94L223.90,240.67L224.18,241.39L224.47,242.05L224.77,242.71L225.07,243.30L225.38,243.88L226.01,244.92L226.66,245.82L227.32,246.57L228.00,247.19L228.69,247.67L229.39,248.01L230.12,248.22L230.87,248.28L230.97,248.27L231.06,248.28L231.15,248.27L231.24,248.28L231.34,248.27L231.43,248.27L231.52,248.26L231.61,248.27L232.37,248.20L233.10,247.98L233.81,247.63L234.50,247.13L235.17,246.50L235.84,245.73L236.49,244.82L236.80,244.29L237.12,243.77L237.43,243.17L237.73,242.58L238.03,241.91L238.32,241.25L238.60,240.52L238.88,239.79L239.14,238.99L239.40,238.19L239.63,237.32L239.86,236.46L240.07,235.53L240.27,234.60L240.45,233.60L240.62,232.60L240.76,231.54L240.90,230.48L240.98,229.73L241.05,228.97L241.12,228.22L241.17,227.42L241.22,226.63L241.26,225.83L241.29,224.99L241.32,224.15L241.35,223.31L241.36,222.42L241.37,221.54L241.37,220.65L241.37,219.78L241.36,218.91L241.35,218.03L241.32,217.21L241.29,216.38L241.26,215.55L241.22,214.76L241.17,213.98L241.12,213.19L241.05,212.45L240.98,211.71L240.90,210.97L240.76,209.92L240.62,208.88L240.45,207.89L240.27,206.91L240.07,206.00L239.87,205.08L239.64,204.23L239.41,203.38L239.15,202.59L238.90,201.81L238.62,201.09L238.35,200.37L238.05,199.71L237.76,199.06L237.46,198.48L237.15,197.89L236.52,196.86L235.87,195.97L235.20,195.22L234.53,194.60L233.83,194.12L233.12,193.78L232.38,193.58L231.61,193.52L231.55,193.53L231.43,193.52L231.37,193.54L231.24,193.53L231.18,193.54L231.06,193.53L231.00,193.54L230.87,193.53ZM231.98,196.93L232.50,197.20L233.00,197.59L233.48,198.10L233.94,198.71L234.37,199.44L234.78,200.28L235.17,201.23L235.53,202.30L235.70,202.90L235.87,203.49L236.03,204.16L236.18,204.83L236.32,205.57L236.46,206.31L236.59,207.13L236.71,207.94L236.82,208.82L236.92,209.70L237.01,210.66L237.09,211.61L237.16,212.64L237.23,213.67L237.26,214.40L237.29,215.13L237.32,215.86L237.34,216.64L237.36,217.42L237.37,218.20L237.38,219.03L237.38,219.86L237.39,220.69L237.38,221.52L237.38,222.35L237.37,223.19L237.36,223.97L237.34,224.76L237.32,225.54L237.29,226.28L237.26,227.02L237.23,227.76L237.16,228.80L237.10,229.84L237.01,230.80L236.92,231.77L236.82,232.67L236.71,233.57L236.59,234.39L236.46,235.22L236.32,235.97L236.18,236.73L236.03,237.41L235.87,238.10L235.70,238.71L235.53,239.32L235.35,239.87L235.17,240.42L234.78,241.41L234.36,242.28L233.93,243.03L233.47,243.67L233.00,244.19L232.50,244.60L231.97,244.89L231.43,245.07L231.24,245.09L231.06,245.08L230.51,244.91L229.99,244.62L229.49,244.22L229.01,243.71L228.55,243.08L228.12,242.33L227.71,241.47L227.32,240.49L227.14,239.95L226.95,239.40L226.79,238.79L226.62,238.18L226.46,237.50L226.31,236.81L226.17,236.06L226.03,235.31L225.91,234.49L225.78,233.66L225.68,232.77L225.57,231.87L225.49,230.91L225.40,229.94L225.34,228.90L225.27,227.87L225.24,227.13L225.21,226.39L225.18,225.65L225.16,224.87L225.14,224.08L225.13,223.29L225.12,222.46L225.12,221.63L225.11,220.80L225.12,219.97L225.12,219.14L225.13,218.31L225.14,217.53L225.16,216.75L225.18,215.97L225.21,215.24L225.24,214.51L225.27,213.77L225.34,212.75L225.40,211.72L225.49,210.76L225.58,209.80L225.68,208.92L225.79,208.03L225.91,207.22L226.03,206.41L226.17,205.66L226.31,204.92L226.46,204.25L226.62,203.58L226.78,202.98L226.95,202.38L227.31,201.30L227.70,200.34L228.11,199.49L228.54,198.76L229.00,198.14L229.48,197.62L229.98,197.23L230.50,196.94L231.06,196.77L231.24,196.75L231.43,196.76ZM255.52,192.74L253.66,192.66L251.80,192.59L249.94,192.51L248.08,192.44L246.22,192.36L246.00,192.36L245.78,192.35L245.55,192.34L245.33,192.33L245.33,193.42L245.33,194.51L246.86,195.11L248.39,195.71L248.39,196.79L248.39,197.87L248.39,198.95L248.39,200.03L248.39,201.12L248.39,202.20L248.39,203.28L248.39,204.36L248.39,205.45L248.39,206.53L248.39,207.61L248.39,208.69L248.39,209.77L248.39,210.86L248.39,211.94L248.39,213.02L248.39,214.10L248.39,215.19L248.39,216.27L248.39,217.35L248.39,218.43L248.39,219.51L248.39,220.60L248.39,221.68L248.39,222.76L248.39,223.84L248.39,224.93L248.39,226.01L248.39,227.09L248.39,228.17L248.39,229.25L248.39,230.34L248.39,231.42L248.39,232.50L248.39,233.58L248.39,234.66L248.39,235.75L248.39,236.83L248.39,237.91L248.39,238.99L248.39,240.08L248.39,241.16L248.39,242.24L248.39,243.32L248.39,244.40L246.86,244.90L245.33,245.39L245.33,246.49L245.33,247.58L245.55,247.59L245.78,247.60L246.00,247.61L246.22,247.61L248.21,247.69L250.19,247.77L252.17,247.85L254.15,247.93L256.13,248.01L258.11,248.09L260.09,248.17L262.07,248.25L264.05,248.33L264.28,248.34L264.50,248.34L264.73,248.35L264.95,248.36L264.97,247.29L264.99,246.22L265.00,245.15L265.02,244.08L265.03,243.01L265.05,241.94L265.07,240.87L265.08,239.80L265.10,238.73L265.11,237.66L265.13,236.59L265.15,235.52L265.16,234.45L265.18,233.37L265.19,232.30L265.21,231.23L265.23,230.16L265.24,229.09L265.26,228.02L265.27,226.95L265.05,226.94L264.82,226.93L264.60,226.92L264.38,226.92L264.12,226.91L263.89,226.90L263.67,226.89L263.44,226.88L263.22,226.87L263.15,227.93L263.08,229.00L263.01,230.06L262.94,231.12L262.87,232.19L262.80,233.25L262.73,234.31L262.66,235.38L262.60,236.44L262.53,237.50L262.46,238.57L262.39,239.63L262.32,240.69L262.25,241.76L262.18,242.82L262.11,243.88L261.74,244.02L261.32,244.15L260.86,244.25L260.36,244.34L259.83,244.41L259.25,244.46L258.63,244.49L257.97,244.51L257.27,244.50L256.53,244.48L254.63,244.41L252.73,244.33L252.73,243.23L252.73,242.13L252.73,241.03L252.73,239.93L252.73,238.83L252.73,237.72L252.73,236.62L252.73,235.52L252.73,234.42L252.73,233.32L252.73,232.22L252.73,231.12L252.73,230.02L252.73,228.91L252.73,227.81L252.73,226.71L252.73,225.61L252.73,224.51L252.73,223.41L252.73,222.31L252.73,221.21L252.73,220.11L252.73,219.00L252.73,217.90L252.73,216.80L252.73,215.70L252.73,214.60L252.73,213.50L252.73,212.40L252.73,211.30L252.73,210.19L252.73,209.09L252.73,207.99L252.73,206.89L252.73,205.79L252.73,204.69L252.73,203.59L252.73,202.49L252.73,201.39L252.73,200.28L252.73,199.18L252.73,198.08L252.73,196.98L252.73,195.88L253.96,195.57L255.19,195.26L256.42,194.96L256.42,193.86L256.42,192.77L256.19,192.76L255.97,192.75L255.74,192.74ZM290.93,250.89L291.15,250.91L291.38,250.94L291.60,250.97L291.60,249.91L291.60,248.85L290.18,248.14L288.76,247.43L288.93,246.41L289.11,245.40L289.29,244.38L289.47,243.36L289.65,242.35L289.82,241.33L290.00,240.32L290.18,239.30L290.36,238.29L290.54,237.27L290.71,236.25L290.89,235.24L292.76,235.47L294.62,235.69L296.48,235.92L298.35,236.15L298.52,237.21L298.70,238.27L298.87,239.33L299.05,240.39L299.22,241.45L299.40,242.50L299.57,243.56L299.75,244.62L299.92,245.68L300.10,246.74L300.28,247.80L300.45,248.86L299.03,249.22L297.60,249.59L297.60,250.64L297.60,251.70L297.83,251.73L298.05,251.76L298.28,251.78L298.50,251.81L300.12,252.01L301.73,252.21L303.35,252.40L304.96,252.60L306.58,252.80L306.80,252.83L307.03,252.85L307.25,252.88L307.48,252.91L307.48,251.85L307.48,250.79L306.13,250.09L304.78,249.39L304.63,248.31L304.47,247.23L304.32,246.16L304.16,245.08L304.00,244.01L303.85,242.93L303.69,241.85L303.53,240.78L303.38,239.70L303.22,238.62L303.06,237.55L302.91,236.47L302.75,235.39L302.59,234.32L302.44,233.24L302.28,232.16L302.12,231.09L301.97,230.01L301.81,228.93L301.65,227.86L301.50,226.78L301.34,225.70L301.18,224.63L301.03,223.55L300.87,222.47L300.71,221.40L300.56,220.32L300.40,219.24L300.24,218.17L300.09,217.09L299.93,216.01L299.77,214.94L299.62,213.86L299.46,212.78L299.30,211.71L299.15,210.63L298.99,209.55L298.83,208.48L298.68,207.40L298.52,206.32L298.36,205.25L298.21,204.17L298.05,203.09L297.89,202.02L297.74,200.94L297.58,199.86L297.43,198.79L297.27,197.71L297.04,197.68L296.82,197.66L296.59,197.63L296.37,197.60L295.32,197.47L294.26,197.34L294.04,197.32L293.81,197.29L293.59,197.26L293.36,197.23L293.21,198.27L293.06,199.31L292.91,200.35L292.76,201.39L292.61,202.43L292.46,203.47L292.31,204.51L292.16,205.54L292.01,206.58L291.86,207.62L291.70,208.66L291.55,209.70L291.40,210.74L291.25,211.78L291.10,212.82L290.95,213.86L290.80,214.90L290.65,215.94L290.50,216.97L290.35,218.01L290.20,219.05L290.05,220.09L289.90,221.13L289.75,222.17L289.60,223.21L289.44,224.25L289.29,225.29L289.14,226.33L288.99,227.36L288.84,228.40L288.69,229.44L288.54,230.48L288.39,231.52L288.24,232.56L288.09,233.60L287.94,234.64L287.79,235.68L287.64,236.72L287.49,237.75L287.34,238.79L287.18,239.83L287.03,240.87L286.88,241.91L286.73,242.95L286.58,243.99L286.43,245.03L286.28,246.07L286.13,247.11L284.93,247.50L283.73,247.89L283.73,248.95L283.73,250.00L283.95,250.03L284.18,250.06L284.40,250.09L284.62,250.11L286.14,250.30L287.66,250.49L289.18,250.67L290.70,250.86ZM297.86,232.50L296.23,232.30L294.61,232.10L292.99,231.90L291.37,231.70L291.50,230.66L291.63,229.62L291.77,228.57L291.90,227.53L292.03,226.49L292.17,225.44L292.30,224.40L292.43,223.35L292.56,222.31L292.70,221.27L292.83,220.22L292.96,219.18L293.10,218.14L293.23,217.09L293.36,216.05L293.50,215.00L293.63,213.96L293.76,212.92L293.90,211.87L294.03,210.83L294.16,209.79L294.30,208.74L294.43,207.70L294.56,206.65L294.70,207.73L294.84,208.81L294.97,209.88L295.11,210.96L295.25,212.04L295.39,213.12L295.52,214.19L295.66,215.27L295.80,216.35L295.93,217.42L296.07,218.50L296.21,219.58L296.35,220.65L296.48,221.73L296.62,222.81L296.76,223.88L296.90,224.96L297.03,226.04L297.17,227.11L297.31,228.19L297.44,229.27L297.58,230.35L297.72,231.42ZM326.35,203.80L327.87,204.60L329.39,205.40L329.39,206.48L329.39,207.57L329.39,208.66L329.39,209.74L329.39,210.83L329.39,211.92L329.39,213.00L329.39,214.09L329.39,215.18L329.39,216.26L329.39,217.35L329.39,218.44L329.39,219.52L329.39,220.61L329.39,221.70L329.39,222.78L329.39,223.87L329.39,224.96L329.39,226.04L329.39,227.13L329.39,228.22L329.39,229.30L329.39,230.39L329.39,231.48L329.39,232.57L329.39,233.65L329.39,234.74L329.39,235.83L329.39,236.91L329.39,238.00L329.38,238.70L329.37,239.40L329.35,240.07L329.32,240.73L329.28,241.36L329.24,241.98L329.18,242.57L329.11,243.15L329.04,243.70L328.96,244.25L328.77,245.27L328.54,246.21L328.28,247.07L327.99,247.86L327.66,248.57L327.30,249.20L326.91,249.76L326.48,250.23L326.03,250.63L325.55,250.95L325.04,251.18L324.49,251.34L323.92,251.42L323.31,251.43L323.30,251.43L322.44,251.16L321.42,250.54L320.52,249.64L320.13,249.06L319.74,248.47L319.41,247.75L319.08,247.03L318.81,246.17L318.54,245.32L318.33,244.32L318.12,243.33L318.02,242.58L317.92,241.82L317.82,241.07L317.76,240.22L317.70,239.38L317.64,238.54L317.62,237.60L317.60,236.67L317.58,235.73L317.58,234.65L317.58,233.57L317.58,232.49L317.58,231.41L317.58,230.32L317.58,229.24L317.58,228.16L317.58,227.08L317.58,226.00L317.58,224.92L317.58,223.84L317.58,222.75L317.58,221.67L317.58,220.59L317.58,219.51L317.58,218.43L317.58,217.35L317.58,216.27L317.58,215.18L317.58,214.10L317.58,213.02L317.58,211.94L317.58,210.86L317.58,209.78L317.58,208.70L317.58,207.61L317.58,206.53L317.58,205.45L317.58,204.37L317.58,203.29L319.03,203.02L320.49,202.76L320.49,201.69L320.49,200.62L320.26,200.58L320.04,200.54L319.81,200.50L319.59,200.46L317.95,200.17L316.32,199.88L314.69,199.59L313.06,199.30L311.43,199.01L311.20,198.97L310.98,198.93L310.75,198.89L310.53,198.85L310.53,199.91L310.53,200.98L311.98,201.77L313.43,202.55L313.43,203.61L313.43,204.68L313.43,205.75L313.43,206.81L313.43,207.88L313.43,208.94L313.43,210.01L313.43,211.08L313.43,212.14L313.43,213.21L313.43,214.28L313.43,215.34L313.43,216.41L313.43,217.47L313.43,218.54L313.43,219.61L313.43,220.67L313.43,221.74L313.43,222.80L313.43,223.87L313.43,224.94L313.43,226.00L313.43,227.07L313.43,228.13L313.43,229.20L313.43,230.27L313.43,231.33L313.43,232.40L313.43,233.46L313.43,234.53L313.43,235.60L313.44,236.47L313.46,237.34L313.49,238.18L313.52,239.01L313.58,239.81L313.63,240.61L313.71,241.37L313.79,242.14L313.89,242.86L313.99,243.59L314.12,244.28L314.24,244.97L314.38,245.62L314.53,246.28L314.70,246.89L314.87,247.51L315.06,248.09L315.25,248.67L315.67,249.76L316.14,250.76L316.66,251.68L317.22,252.51L317.83,253.25L318.48,253.90L319.18,254.46L319.92,254.94L320.71,255.32L321.55,255.61L322.43,255.82L322.54,255.83L322.65,255.86L322.76,255.87L322.88,255.90L322.99,255.91L323.10,255.94L323.21,255.95L323.33,255.98L324.16,256.08L324.95,256.08L325.70,255.97L326.41,255.76L327.08,255.44L327.71,255.02L328.30,254.50L328.85,253.87L329.36,253.14L329.83,252.30L330.25,251.36L330.44,250.84L330.63,250.32L330.80,249.74L330.97,249.17L331.12,248.54L331.26,247.91L331.38,247.23L331.51,246.55L331.61,245.81L331.71,245.08L331.79,244.29L331.87,243.51L331.92,242.67L331.98,241.83L332.01,240.94L332.04,240.04L332.06,239.10L332.07,238.15L332.07,237.08L332.07,236.00L332.07,234.93L332.07,233.85L332.07,232.77L332.07,231.70L332.07,230.62L332.07,229.55L332.07,228.47L332.07,227.39L332.07,226.32L332.07,225.24L332.07,224.17L332.07,223.09L332.07,222.01L332.07,220.94L332.07,219.86L332.07,218.79L332.07,217.71L332.07,216.63L332.07,215.56L332.07,214.48L332.07,213.41L332.07,212.33L332.07,211.25L332.07,210.18L332.07,209.10L332.07,208.02L332.07,206.95L332.07,205.87L333.52,205.61L334.98,205.34L334.98,204.28L334.98,203.21L334.75,203.17L334.53,203.13L334.30,203.09L334.08,203.05L332.37,202.74L330.66,202.44L328.96,202.13L327.25,201.83L327.02,201.79L326.80,201.75L326.57,201.71L326.35,201.67L326.35,202.74ZM352.90,212.23L354.31,213.07L355.73,213.92L355.73,214.96L355.73,216.00L355.73,217.04L355.73,218.07L355.73,219.11L355.73,220.15L355.73,221.19L355.73,222.23L355.73,223.27L355.73,224.31L355.73,225.34L355.73,226.38L355.73,227.42L355.73,228.46L355.73,229.50L355.73,230.54L355.73,231.58L355.73,232.61L355.73,233.65L355.73,234.69L355.73,235.73L355.73,236.77L355.73,237.81L355.73,238.85L355.73,239.88L355.73,240.92L355.73,241.96L355.73,243.00L355.73,244.04L355.73,245.08L355.73,246.12L355.73,247.15L355.44,246.05L355.16,244.94L354.88,243.84L354.59,242.73L354.31,241.63L354.03,240.52L353.74,239.42L353.46,238.31L353.17,237.20L352.89,236.10L352.61,234.99L352.32,233.89L352.04,232.78L351.76,231.68L351.47,230.57L351.19,229.46L350.90,228.36L350.62,227.25L350.34,226.15L350.05,225.04L349.77,223.94L349.49,222.83L349.20,221.73L348.92,220.62L348.63,219.51L348.35,218.41L348.07,217.30L347.78,216.20L347.50,215.09L347.22,213.99L346.93,212.88L346.65,211.77L346.36,210.67L346.08,209.56L345.80,208.46L345.57,208.41L345.35,208.35L345.12,208.30L344.90,208.25L343.07,207.82L341.25,207.40L339.43,206.98L339.20,206.93L338.98,206.87L338.75,206.82L338.53,206.77L338.53,207.83L338.53,208.89L339.87,209.72L341.22,210.55L341.22,211.60L341.22,212.65L341.22,213.70L341.22,214.75L341.22,215.80L341.22,216.85L341.22,217.90L341.22,218.95L341.22,220.00L341.22,221.05L341.22,222.10L341.22,223.15L341.22,224.20L341.22,225.25L341.22,226.30L341.22,227.35L341.22,228.40L341.22,229.45L341.22,230.50L341.22,231.55L341.22,232.60L341.22,233.65L341.22,234.70L341.22,235.75L341.22,236.80L341.22,237.85L341.22,238.90L341.22,239.95L341.22,241.00L341.22,242.05L341.22,243.10L341.22,244.15L341.22,245.20L341.22,246.25L341.22,247.30L341.22,248.35L341.22,249.40L341.22,250.45L341.22,251.50L341.22,252.55L341.22,253.60L341.22,254.65L341.22,255.70L341.22,256.75L341.22,257.80L339.87,258.02L338.53,258.25L338.53,259.31L338.53,260.37L338.75,260.42L338.98,260.47L339.20,260.53L339.43,260.58L340.99,260.94L342.56,261.31L344.13,261.67L345.70,262.03L345.92,262.09L346.15,262.14L346.37,262.19L346.60,262.24L346.60,261.18L346.60,260.12L345.19,259.26L343.77,258.39L343.77,257.32L343.77,256.25L343.77,255.18L343.77,254.12L343.77,253.05L343.77,251.98L343.77,250.91L343.77,249.84L343.77,248.77L343.77,247.71L343.77,246.64L343.77,245.57L343.77,244.50L343.77,243.43L343.77,242.36L343.77,241.30L343.77,240.23L343.77,239.16L343.77,238.09L343.77,237.02L343.77,235.96L343.77,234.89L343.77,233.82L343.77,232.75L343.77,231.68L343.77,230.61L343.77,229.55L343.77,228.48L343.77,227.41L343.77,226.34L343.77,225.27L343.77,224.20L343.77,223.14L343.77,222.07L343.77,221.00L343.77,219.93L343.77,218.86L343.77,217.79L343.77,216.73L344.05,217.83L344.33,218.94L344.62,220.05L344.90,221.16L345.18,222.27L345.46,223.38L345.74,224.49L346.02,225.59L346.30,226.70L346.58,227.81L346.86,228.92L347.14,230.03L347.42,231.14L347.71,232.24L347.99,233.35L348.27,234.46L348.55,235.57L348.83,236.68L349.11,237.79L349.39,238.90L349.67,240.00L349.95,241.11L350.23,242.22L350.52,243.33L350.80,244.44L351.08,245.55L351.36,246.66L351.64,247.76L351.92,248.87L352.20,249.98L352.48,251.09L352.76,252.20L353.04,253.31L353.32,254.42L353.61,255.52L353.89,256.63L354.17,257.74L354.45,258.85L354.73,259.96L355.01,261.07L355.29,262.17L355.57,263.28L355.85,264.39L356.08,264.44L356.30,264.50L356.53,264.55L356.75,264.60L357.38,264.75L357.60,264.80L357.83,264.85L358.05,264.90L358.28,264.95L358.28,263.90L358.28,262.85L358.28,261.80L358.28,260.75L358.28,259.70L358.28,258.65L358.28,257.60L358.28,256.55L358.28,255.50L358.28,254.45L358.28,253.39L358.28,252.34L358.28,251.29L358.28,250.24L358.28,249.19L358.28,248.14L358.28,247.09L358.28,246.04L358.28,244.99L358.28,243.94L358.28,242.89L358.28,241.84L358.28,240.78L358.28,239.73L358.28,238.68L358.28,237.63L358.28,236.58L358.28,235.53L358.28,234.48L358.28,233.43L358.28,232.38L358.28,231.33L358.28,230.28L358.28,229.22L358.28,228.17L358.28,227.12L358.28,226.07L358.28,225.02L358.28,223.97L358.28,222.92L358.28,221.87L358.28,220.82L358.28,219.77L358.28,218.72L358.28,217.66L358.28,216.61L358.28,215.56L358.28,214.51L359.63,214.31L360.98,214.10L360.98,213.04L360.98,211.98L360.75,211.93L360.53,211.88L360.30,211.82L360.08,211.77L358.51,211.41L356.94,211.04L355.37,210.68L353.80,210.32L353.58,210.26L353.35,210.21L353.13,210.16L352.90,210.11L352.90,211.17ZM369.04,265.84L369.04,266.92L369.04,268.01L369.39,268.10L369.74,268.20L370.09,268.30L370.44,268.40L372.33,268.93L374.21,269.46L376.10,270.00L377.99,270.53L378.34,270.63L378.69,270.73L379.04,270.82L379.39,270.92L379.39,269.84L379.39,268.76L377.85,267.77L376.31,266.79L376.31,265.70L376.31,264.61L376.31,263.52L376.31,262.44L376.31,261.35L376.31,260.26L376.31,259.17L376.31,258.08L376.31,257.00L376.31,255.91L376.31,254.82L376.31,253.73L376.31,252.64L376.31,251.55L376.31,250.47L376.31,249.38L376.31,248.29L376.31,247.20L376.31,246.11L376.31,245.02L376.31,243.94L376.31,242.85L376.31,241.76L376.31,240.67L376.31,239.58L376.31,238.50L376.31,237.41L376.31,236.32L376.31,235.23L376.31,234.14L376.31,233.05L376.31,231.97L376.31,230.88L376.31,229.79L376.31,228.70L376.31,227.61L376.31,226.53L376.31,225.44L376.31,224.35L376.31,223.26L376.31,222.17L376.31,221.08L376.31,220.00L376.31,218.91L376.63,219.01L376.96,219.12L377.28,219.23L377.60,219.34L377.91,219.46L378.21,219.58L378.51,219.96L378.81,220.12L379.09,220.29L379.35,220.45L379.59,220.60L379.81,220.76L380.01,220.91L380.19,221.05L380.35,221.20L380.49,221.34L380.61,221.47L380.70,221.60L380.73,222.66L380.75,223.72L380.78,224.79L380.81,225.85L380.83,226.91L380.86,227.97L380.88,229.03L380.91,230.09L380.94,231.15L380.96,232.21L380.99,233.27L381.01,234.33L381.04,235.40L381.07,236.46L381.09,237.52L381.44,237.62L381.79,237.72L382.08,237.79L382.14,237.81L382.43,237.89L382.49,237.91L382.78,237.99L383.13,238.09L383.48,238.19L383.48,237.15L383.48,236.10L383.48,235.06L383.48,234.02L383.48,232.97L383.48,231.93L383.48,230.89L383.48,229.84L383.48,228.80L383.48,227.76L383.48,226.71L383.48,225.67L383.48,224.63L383.48,223.59L383.48,222.54L383.48,221.50L383.48,220.46L383.48,219.41L383.48,218.37L383.48,217.33L383.13,217.23L382.78,217.13L382.43,217.03L382.08,216.93L380.12,216.38L378.16,215.83L376.21,215.28L374.25,214.72L372.29,214.17L370.34,213.62L368.38,213.07L366.43,212.52L366.08,212.42L365.73,212.32L365.38,212.22L365.03,212.12L365.03,213.17L365.03,214.21L365.03,215.25L365.03,216.30L365.03,217.34L365.03,218.38L365.03,219.43L365.03,220.47L365.03,221.51L365.03,222.55L365.03,223.60L365.03,224.64L365.03,225.68L365.03,226.73L365.03,227.77L365.03,228.81L365.03,229.86L365.03,230.90L365.03,231.94L365.03,232.99L365.38,233.09L365.73,233.18L365.99,233.26L366.08,233.28L366.34,233.36L366.43,233.38L366.69,233.46L367.04,233.56L367.39,233.65L367.42,232.61L367.45,231.56L367.47,230.52L367.50,229.47L367.52,228.42L367.55,227.38L367.58,226.33L367.60,225.28L367.63,224.24L367.65,223.19L367.68,222.14L367.71,221.10L367.73,220.05L367.76,219.01L367.78,217.96L368.08,217.75L368.41,217.59L368.80,217.47L369.23,217.40L369.70,217.37L370.23,217.23L370.80,217.34L371.41,217.47L372.07,217.63L372.12,217.64L372.12,218.73L372.12,219.82L372.12,220.91L372.12,222.00L372.12,223.09L372.12,224.18L372.12,225.27L372.12,226.36L372.12,227.45L372.12,228.54L372.12,229.63L372.12,230.72L372.12,231.81L372.12,232.90L372.12,233.99L372.12,235.08L372.12,236.17L372.12,237.27L372.12,238.36L372.12,239.45L372.12,240.54L372.12,241.63L372.12,242.72L372.12,243.81L372.12,244.90L372.12,245.99L372.12,247.08L372.12,248.17L372.12,249.26L372.12,250.35L372.12,251.44L372.12,252.53L372.12,253.62L372.12,254.71L372.12,255.80L372.12,256.89L372.12,257.98L372.12,259.07L372.12,260.16L372.12,261.25L372.12,262.34L372.12,263.43L372.12,264.52L372.12,265.61L370.58,265.73Z" fill="#605e55" stroke="#181816" stroke-width="1.05" stroke-linejoin="round" fill-rule="evenodd"/><path d="M185.60,277.67L185.60,278.35L198.40,278.35L198.59,273.76L197.89,273.76L197.29,276.88L197.27,276.93L197.23,276.98L197.17,277.00L196.98,277.04L196.97,277.04L196.74,277.07L196.74,277.08L196.47,277.11L196.46,277.11L196.15,277.13L196.15,277.13L195.80,277.16L195.80,277.16L195.42,277.18L195.41,277.18L194.99,277.19L194.99,277.19L194.52,277.20L194.52,277.20L194.02,277.21L194.02,277.21L193.48,277.21L193.48,277.21L190.73,277.21L190.68,277.20L190.63,277.17L190.59,277.12L190.58,277.06L190.58,270.29L190.59,270.24L190.63,270.19L190.68,270.16L190.73,270.14L194.54,270.14L194.59,270.15L194.64,270.18L194.67,270.22L194.69,270.27L195.00,272.13L195.69,272.13L195.69,267.04L195.00,267.04L194.69,268.85L194.67,268.90L194.64,268.94L194.59,268.97L194.54,268.98L190.73,268.98L190.68,268.97L190.63,268.93L190.59,268.89L190.58,268.83L190.58,262.39L190.59,262.33L190.63,262.28L190.68,262.25L190.73,262.24L192.99,262.24L192.99,262.24L193.44,262.24L193.44,262.24L193.87,262.25L193.87,262.25L194.28,262.26L194.28,262.26L194.66,262.27L194.66,262.27L195.03,262.29L195.03,262.29L195.37,262.31L195.37,262.31L195.69,262.33L195.69,262.33L195.99,262.36L195.99,262.36L196.27,262.39L196.27,262.39L196.52,262.42L196.59,262.45L196.63,262.49L196.65,262.55L196.98,265.26L197.69,265.26L197.69,261.10L185.60,261.10L185.60,261.78L187.34,262.10L187.39,262.12L187.43,262.15L187.46,262.19L187.47,262.25L187.47,277.19L187.46,277.24L187.43,277.29L187.39,277.32L187.34,277.34ZM200.40,273.27L200.40,277.73L200.50,277.78L200.69,277.85L200.89,277.93L201.10,278.00L201.32,278.07L201.54,278.13L201.77,278.19L202.01,278.25L202.26,278.31L202.51,278.36L202.77,278.41L203.02,278.45L203.28,278.49L203.53,278.52L203.79,278.55L204.04,278.57L204.29,278.59L204.54,278.60L204.79,278.61L205.03,278.61L206.05,278.56L206.96,278.39L207.76,278.12L208.45,277.74L209.03,277.26L209.50,276.67L209.87,275.96L210.14,275.15L210.30,274.22L210.35,273.17L210.35,272.89L210.33,272.62L210.31,272.35L210.27,272.09L210.23,271.84L210.18,271.60L210.12,271.37L210.04,271.14L209.96,270.92L209.87,270.71L209.78,270.51L209.67,270.31L209.55,270.12L209.43,269.93L209.29,269.75L209.15,269.58L209.00,269.42L208.84,269.26L208.68,269.11L208.50,268.97L208.31,268.82L208.08,268.67L207.82,268.52L207.53,268.36L207.21,268.19L206.85,268.02L206.47,267.84L206.05,267.66L205.60,267.47L205.12,267.28L204.87,267.18L204.87,267.18L204.63,267.08L204.63,267.08L204.41,266.97L204.40,266.97L204.20,266.86L204.19,266.86L204.00,266.75L203.99,266.75L203.81,266.64L203.81,266.63L203.64,266.52L203.63,266.51L203.48,266.40L203.47,266.39L203.33,266.27L203.33,266.26L203.20,266.14L203.19,266.13L203.08,266.01L203.07,266.00L202.97,265.87L202.96,265.86L202.87,265.72L202.87,265.71L202.79,265.57L202.78,265.56L202.72,265.41L202.71,265.40L202.66,265.25L202.66,265.24L202.62,265.08L202.61,265.07L202.58,264.90L202.58,264.89L202.56,264.72L202.56,264.71L202.56,264.54L202.56,264.53L202.56,264.29L202.56,264.28L202.59,264.06L202.59,264.04L202.62,263.83L202.63,263.82L202.68,263.62L202.68,263.60L202.74,263.42L202.75,263.40L202.83,263.23L202.83,263.21L202.93,263.05L202.94,263.04L203.04,262.89L203.05,262.87L203.18,262.74L203.19,262.73L203.32,262.60L203.33,262.59L203.48,262.48L203.49,262.47L203.66,262.37L203.67,262.36L203.84,262.27L203.85,262.27L204.04,262.19L204.05,262.19L204.25,262.12L204.26,262.12L204.47,262.06L204.48,262.06L204.70,262.02L204.71,262.02L204.95,261.99L204.96,261.99L205.21,261.97L205.21,261.97L205.47,261.96L205.48,261.96L205.78,261.97L205.79,261.98L206.07,262.00L206.08,262.01L206.36,262.05L206.37,262.06L206.64,262.12L206.65,262.13L206.91,262.21L206.92,262.22L207.18,262.33L207.19,262.33L207.43,262.46L207.44,262.46L207.68,262.61L207.69,262.61L207.93,262.78L207.93,262.78L208.16,262.97L208.19,263.01L208.21,263.05L208.68,265.34L209.37,265.34L209.37,261.43L209.05,261.36L208.62,261.26L208.20,261.18L207.79,261.10L207.38,261.04L206.98,260.99L206.60,260.95L206.22,260.93L205.84,260.91L205.48,260.90L204.99,260.92L204.53,260.95L204.10,261.01L203.69,261.09L203.30,261.20L202.94,261.33L202.61,261.48L202.30,261.66L202.01,261.85L201.75,262.07L201.51,262.32L201.30,262.58L201.11,262.87L200.94,263.17L200.81,263.50L200.69,263.86L200.60,264.23L200.54,264.63L200.50,265.05L200.49,265.49L200.49,265.74L200.50,265.99L200.52,266.23L200.54,266.45L200.57,266.67L200.61,266.89L200.65,267.09L200.70,267.28L200.75,267.47L200.81,267.64L200.88,267.82L200.95,267.98L201.03,268.14L201.11,268.30L201.20,268.45L201.29,268.59L201.38,268.73L201.48,268.87L201.58,269.00L201.69,269.12L201.80,269.24L201.92,269.36L202.04,269.47L202.17,269.58L202.30,269.69L202.44,269.80L202.58,269.90L202.73,270.00L202.88,270.09L203.04,270.18L203.21,270.28L203.40,270.38L203.61,270.48L203.85,270.59L204.11,270.71L204.38,270.84L204.68,270.96L205.00,271.10L205.35,271.24L205.71,271.39L205.71,271.39L205.96,271.49L205.96,271.49L206.20,271.60L206.20,271.61L206.42,271.72L206.43,271.72L206.63,271.84L206.64,271.84L206.83,271.96L206.84,271.96L207.02,272.08L207.02,272.08L207.19,272.21L207.20,272.21L207.35,272.34L207.35,272.34L207.49,272.47L207.50,272.48L207.63,272.61L207.63,272.62L207.74,272.76L207.75,272.77L207.85,272.91L207.86,272.92L207.95,273.07L207.95,273.08L208.03,273.23L208.03,273.24L208.10,273.40L208.10,273.41L208.16,273.58L208.16,273.59L208.20,273.76L208.20,273.77L208.23,273.95L208.23,273.96L208.25,274.15L208.25,274.16L208.26,274.35L208.26,274.36L208.23,274.95L208.23,274.96L208.13,275.49L208.13,275.51L207.97,275.97L207.96,276.00L207.74,276.40L207.73,276.42L207.44,276.76L207.42,276.78L207.08,277.06L207.06,277.08L206.65,277.29L206.63,277.30L206.16,277.46L206.14,277.46L205.61,277.56L205.59,277.56L205.00,277.59L204.99,277.59L204.79,277.59L204.78,277.59L204.59,277.57L204.58,277.57L204.38,277.55L204.38,277.55L204.19,277.52L204.18,277.52L203.99,277.48L203.98,277.48L203.79,277.43L203.78,277.43L203.59,277.37L203.59,277.37L203.40,277.31L203.39,277.30L203.21,277.23L203.20,277.23L203.02,277.15L203.01,277.14L202.83,277.05L202.82,277.05L202.65,276.96L202.65,276.96L202.49,276.86L202.48,276.86L202.33,276.75L202.32,276.75L202.18,276.64L202.17,276.64L202.04,276.53L202.03,276.53L201.91,276.41L201.90,276.41L201.79,276.29L201.78,276.28L201.68,276.16L201.67,276.15L201.58,276.03L201.55,275.96L201.08,273.27ZM215.67,278.35L221.98,278.35L221.98,277.67L220.21,277.34L220.16,277.32L220.12,277.29L220.09,277.24L220.08,277.19L220.08,262.36L220.10,262.31L220.13,262.26L220.18,262.22L220.23,262.21L220.67,262.21L220.67,262.21L221.09,262.22L221.10,262.22L221.49,262.22L221.49,262.22L221.85,262.23L221.86,262.23L222.19,262.25L222.20,262.25L222.50,262.27L222.51,262.27L222.78,262.30L222.79,262.30L223.04,262.33L223.04,262.33L223.26,262.37L223.27,262.37L223.46,262.41L223.47,262.41L223.63,262.45L223.68,262.48L223.72,262.53L223.74,262.59L223.97,265.71L224.50,265.71L224.50,261.10L213.20,261.10L213.20,265.71L213.72,265.71L213.95,262.59L213.97,262.53L214.01,262.48L214.06,262.45L214.24,262.40L214.25,262.40L214.45,262.36L214.45,262.36L214.68,262.32L214.69,262.32L214.94,262.28L214.94,262.28L215.22,262.25L215.22,262.25L215.52,262.23L215.52,262.23L215.84,262.21L215.85,262.21L216.19,262.20L216.20,262.20L216.57,262.19L216.57,262.19L216.97,262.19L216.97,262.19L217.42,262.19L217.48,262.20L217.53,262.23L217.56,262.28L217.57,262.34L217.57,277.19L217.56,277.24L217.54,277.29L217.50,277.32L217.45,277.34L215.67,277.67ZM227.00,278.73L227.10,278.72L227.20,278.71L227.30,278.68L227.39,278.64L227.48,278.59L227.57,278.53L227.66,278.46L227.74,278.37L227.83,278.27L227.91,278.16L227.98,278.04L228.05,277.91L228.11,277.78L228.16,277.65L228.20,277.50L228.24,277.36L228.26,277.20L228.28,277.04L228.30,276.88L228.30,276.71L228.30,276.53L228.28,276.37L228.26,276.21L228.24,276.05L228.20,275.90L228.16,275.76L228.10,275.62L228.04,275.49L227.98,275.37L227.90,275.25L227.82,275.14L227.74,275.04L227.65,274.95L227.57,274.88L227.48,274.82L227.39,274.77L227.30,274.73L227.20,274.71L227.10,274.69L227.00,274.68L226.90,274.69L226.80,274.71L226.70,274.73L226.61,274.77L226.52,274.82L226.43,274.88L226.34,274.96L226.26,275.04L226.17,275.14L226.09,275.25L226.02,275.37L225.95,275.50L225.89,275.63L225.84,275.77L225.80,275.91L225.76,276.06L225.74,276.21L225.72,276.37L225.70,276.54L225.70,276.71L225.70,276.88L225.72,277.05L225.74,277.21L225.76,277.36L225.80,277.51L225.84,277.65L225.90,277.79L225.96,277.92L226.02,278.05L226.10,278.17L226.18,278.28L226.26,278.38L226.35,278.46L226.43,278.53L226.52,278.59L226.61,278.64L226.70,278.68L226.80,278.71L226.90,278.72ZM247.85,278.35L247.85,275.69L240.65,275.69L240.59,275.68L240.54,275.65L240.51,275.60L240.50,275.54L240.51,275.49L240.54,275.44L240.76,275.21L240.76,275.21L240.98,274.98L240.98,274.98L241.20,274.76L241.20,274.76L241.41,274.54L241.41,274.54L241.62,274.33L241.62,274.33L241.82,274.13L241.83,274.13L242.03,273.93L242.03,273.93L242.23,273.73L242.23,273.73L242.43,273.54L242.43,273.54L242.62,273.35L243.11,272.89L243.56,272.45L243.98,272.04L244.36,271.65L244.71,271.30L245.03,270.96L245.32,270.66L245.57,270.38L245.78,270.13L245.97,269.91L246.13,269.70L246.28,269.49L246.42,269.28L246.56,269.07L246.68,268.86L246.80,268.64L246.91,268.43L247.01,268.21L247.10,268.00L247.18,267.78L247.25,267.56L247.31,267.33L247.37,267.10L247.42,266.86L247.46,266.62L247.50,266.37L247.52,266.12L247.54,265.86L247.56,265.60L247.56,265.34L247.55,264.91L247.51,264.51L247.44,264.14L247.36,263.78L247.24,263.44L247.10,263.13L246.94,262.83L246.75,262.55L246.53,262.29L246.30,262.06L246.03,261.84L245.75,261.64L245.44,261.47L245.10,261.32L244.75,261.19L244.37,261.09L243.97,261.01L243.54,260.95L243.09,260.92L242.61,260.90L242.42,260.91L242.22,260.91L242.03,260.92L241.84,260.93L241.66,260.94L241.48,260.96L241.30,260.98L241.12,261.01L240.95,261.03L240.78,261.06L240.61,261.10L240.44,261.13L240.27,261.17L240.09,261.21L239.92,261.25L239.75,261.29L239.57,261.33L239.40,261.37L239.22,261.42L239.15,261.43L239.15,265.16L239.85,265.16L240.31,262.74L240.32,262.70L240.35,262.66L240.42,262.59L240.43,262.59L240.50,262.53L240.50,262.52L240.57,262.46L240.58,262.46L240.65,262.40L240.66,262.40L240.73,262.35L240.74,262.35L240.81,262.30L240.82,262.29L240.90,262.25L240.90,262.24L240.98,262.20L240.99,262.20L241.07,262.16L241.07,262.16L241.16,262.12L241.16,262.12L241.25,262.09L241.26,262.08L241.35,262.05L241.35,262.05L241.45,262.03L241.46,262.03L241.56,262.00L241.57,262.00L241.67,261.98L241.68,261.98L241.79,261.97L241.80,261.97L241.92,261.95L241.92,261.95L242.05,261.95L242.05,261.95L242.18,261.94L242.18,261.94L242.32,261.94L242.33,261.94L242.52,261.95L242.54,261.95L242.72,261.98L242.74,261.98L242.91,262.02L242.93,262.03L243.10,262.09L243.11,262.09L243.27,262.17L243.29,262.18L243.44,262.28L243.45,262.29L243.60,262.40L243.61,262.41L243.75,262.54L243.76,262.55L243.89,262.70L243.90,262.71L244.02,262.88L244.03,262.89L244.14,263.07L244.14,263.08L244.24,263.27L244.25,263.28L244.34,263.48L244.34,263.49L244.42,263.70L244.42,263.71L244.49,263.94L244.49,263.95L244.54,264.18L244.54,264.19L244.59,264.44L244.59,264.45L244.62,264.70L244.62,264.71L244.63,264.98L244.63,264.99L244.64,265.27L244.64,265.27L244.64,265.59L244.64,265.60L244.63,265.91L244.62,265.91L244.61,266.22L244.61,266.22L244.58,266.52L244.58,266.53L244.54,266.82L244.54,266.83L244.50,267.11L244.50,267.12L244.45,267.39L244.45,267.40L244.39,267.67L244.39,267.68L244.32,267.94L244.32,267.94L244.25,268.20L244.25,268.21L244.17,268.46L244.16,268.46L244.07,268.72L244.07,268.72L243.97,268.97L243.97,268.98L243.86,269.22L243.86,269.23L243.74,269.47L243.74,269.48L243.62,269.72L243.61,269.73L243.48,269.97L243.48,269.97L243.33,270.21L243.33,270.22L243.18,270.46L243.18,270.46L243.02,270.70L243.01,270.70L242.84,270.95L242.84,270.95L242.64,271.21L242.64,271.21L242.43,271.50L242.43,271.50L242.20,271.80L242.19,271.80L241.94,272.11L241.94,272.11L241.67,272.45L241.67,272.45L241.38,272.80L241.38,272.80L241.07,273.17L241.07,273.17L240.74,273.56L240.74,273.56L240.39,273.96L240.23,274.16L240.06,274.36L239.89,274.56L239.72,274.77L239.54,274.98L239.36,275.20L239.18,275.42L239.00,275.65L238.81,275.88L238.65,276.08L238.65,278.35ZM259.45,271.37L259.50,269.65L259.49,268.80L259.45,267.98L259.39,267.21L259.31,266.49L259.20,265.80L259.07,265.16L258.92,264.56L258.74,264.01L258.54,263.50L258.31,263.03L258.07,262.61L257.80,262.23L257.52,261.90L257.21,261.61L256.88,261.37L256.53,261.18L256.16,261.02L255.77,260.91L255.36,260.85L254.92,260.83L254.47,260.85L254.04,260.91L253.64,261.03L253.26,261.18L252.90,261.38L252.57,261.62L252.26,261.91L251.97,262.25L251.71,262.63L251.47,263.05L251.25,263.53L251.05,264.04L250.87,264.60L250.72,265.19L250.59,265.83L250.49,266.51L250.41,267.24L250.35,268.00L250.31,268.81L250.30,269.65L250.31,270.52L250.35,271.34L250.41,272.12L250.49,272.85L250.59,273.55L250.72,274.20L250.87,274.80L251.05,275.37L251.25,275.89L251.47,276.36L251.71,276.80L251.97,277.18L252.25,277.52L252.56,277.81L252.88,278.05L253.23,278.25L253.59,278.41L253.98,278.52L254.40,278.59L254.83,278.61L255.72,278.52L256.50,278.26L257.20,277.82L257.80,277.21L258.31,276.41L258.74,275.43L259.07,274.26L259.31,272.91ZM256.59,268.86L256.59,269.65L256.59,269.65L256.59,270.47L256.59,270.47L256.58,271.23L256.58,271.23L256.56,271.95L256.56,271.95L256.53,272.62L256.53,272.62L256.50,273.25L256.50,273.25L256.45,273.82L256.45,273.83L256.40,274.35L256.40,274.36L256.34,274.84L256.34,274.84L256.28,275.28L256.28,275.28L256.20,275.67L256.20,275.68L256.12,276.02L256.12,276.03L256.03,276.34L256.02,276.34L255.92,276.62L255.92,276.63L255.81,276.86L255.81,276.88L255.69,277.08L255.68,277.09L255.56,277.25L255.54,277.27L255.41,277.40L255.39,277.42L255.24,277.51L255.21,277.52L255.07,277.58L255.03,277.58L254.87,277.60L254.84,277.60L254.68,277.58L254.65,277.58L254.50,277.52L254.47,277.51L254.34,277.42L254.31,277.40L254.18,277.28L254.17,277.26L254.05,277.10L254.04,277.09L253.93,276.89L253.92,276.88L253.82,276.65L253.82,276.64L253.72,276.37L253.72,276.36L253.64,276.06L253.64,276.05L253.56,275.72L253.56,275.71L253.49,275.33L253.49,275.33L253.43,274.90L253.43,274.90L253.38,274.42L253.38,274.41L253.33,273.89L253.33,273.88L253.29,273.30L253.29,273.30L253.26,272.67L253.26,272.67L253.24,271.99L253.24,271.99L253.22,271.26L253.22,271.26L253.21,270.48L253.21,270.48L253.21,269.65L253.21,269.65L253.21,268.84L253.21,268.84L253.22,268.07L253.22,268.07L253.24,267.35L253.24,267.35L253.26,266.68L253.26,266.68L253.29,266.06L253.29,266.06L253.33,265.49L253.33,265.49L253.38,264.97L253.38,264.97L253.43,264.50L253.43,264.49L253.49,264.07L253.49,264.07L253.55,263.70L253.56,263.69L253.63,263.36L253.63,263.36L253.71,263.06L253.72,263.05L253.81,262.79L253.81,262.78L253.92,262.56L253.92,262.54L254.03,262.35L254.04,262.34L254.16,262.18L254.18,262.16L254.31,262.04L254.33,262.03L254.47,261.94L254.50,261.92L254.65,261.87L254.68,261.87L254.84,261.85L254.87,261.85L255.03,261.87L255.07,261.87L255.22,261.93L255.25,261.94L255.39,262.03L255.41,262.05L255.55,262.17L255.56,262.19L255.69,262.35L255.70,262.37L255.81,262.56L255.82,262.58L255.93,262.81L255.93,262.82L256.03,263.09L256.03,263.10L256.12,263.40L256.13,263.41L256.21,263.75L256.21,263.76L256.28,264.14L256.28,264.14L256.35,264.57L256.35,264.57L256.40,265.04L256.40,265.05L256.45,265.57L256.45,265.57L256.50,266.13L256.50,266.14L256.53,266.75L256.53,266.75L256.56,267.40L256.56,267.41L256.58,268.11L256.58,268.11L256.59,268.86ZM270.80,278.35L270.80,275.69L263.60,275.69L263.54,275.68L263.49,275.65L263.46,275.60L263.45,275.54L263.46,275.49L263.49,275.44L263.71,275.21L263.71,275.21L263.93,274.98L263.93,274.98L264.15,274.76L264.15,274.76L264.36,274.54L264.36,274.54L264.57,274.33L264.57,274.33L264.77,274.13L264.78,274.13L264.98,273.93L264.98,273.93L265.18,273.73L265.18,273.73L265.38,273.54L265.38,273.54L265.57,273.35L266.06,272.89L266.51,272.45L266.93,272.04L267.31,271.65L267.66,271.30L267.98,270.96L268.27,270.66L268.52,270.38L268.73,270.13L268.92,269.91L269.08,269.70L269.23,269.49L269.37,269.28L269.51,269.07L269.63,268.86L269.75,268.64L269.86,268.43L269.96,268.21L270.05,268.00L270.13,267.78L270.20,267.56L270.26,267.33L270.32,267.10L270.37,266.86L270.41,266.62L270.45,266.37L270.47,266.12L270.49,265.86L270.51,265.60L270.51,265.34L270.50,264.91L270.46,264.51L270.39,264.14L270.31,263.78L270.19,263.44L270.05,263.13L269.89,262.83L269.70,262.55L269.48,262.29L269.25,262.06L268.98,261.84L268.70,261.64L268.39,261.47L268.05,261.32L267.70,261.19L267.32,261.09L266.92,261.01L266.49,260.95L266.04,260.92L265.56,260.90L265.37,260.91L265.17,260.91L264.98,260.92L264.79,260.93L264.61,260.94L264.43,260.96L264.25,260.98L264.07,261.01L263.90,261.03L263.73,261.06L263.56,261.10L263.39,261.13L263.22,261.17L263.04,261.21L262.87,261.25L262.70,261.29L262.52,261.33L262.35,261.37L262.17,261.42L262.10,261.43L262.10,265.16L262.80,265.16L263.26,262.74L263.27,262.70L263.30,262.66L263.37,262.59L263.38,262.59L263.45,262.53L263.45,262.52L263.52,262.46L263.53,262.46L263.60,262.40L263.61,262.40L263.68,262.35L263.69,262.35L263.76,262.30L263.77,262.29L263.85,262.25L263.85,262.24L263.93,262.20L263.94,262.20L264.02,262.16L264.02,262.16L264.11,262.12L264.11,262.12L264.20,262.09L264.21,262.08L264.30,262.05L264.30,262.05L264.40,262.03L264.41,262.03L264.51,262.00L264.52,262.00L264.62,261.98L264.63,261.98L264.74,261.97L264.75,261.97L264.87,261.95L264.87,261.95L265.00,261.95L265.00,261.95L265.13,261.94L265.13,261.94L265.27,261.94L265.28,261.94L265.47,261.95L265.49,261.95L265.67,261.98L265.69,261.98L265.86,262.02L265.88,262.03L266.05,262.09L266.06,262.09L266.22,262.17L266.24,262.18L266.39,262.28L266.40,262.29L266.55,262.40L266.56,262.41L266.70,262.54L266.71,262.55L266.84,262.70L266.85,262.71L266.97,262.88L266.98,262.89L267.09,263.07L267.09,263.08L267.19,263.27L267.20,263.28L267.29,263.48L267.29,263.49L267.37,263.70L267.37,263.71L267.44,263.94L267.44,263.95L267.49,264.18L267.49,264.19L267.54,264.44L267.54,264.45L267.57,264.70L267.57,264.71L267.58,264.98L267.58,264.99L267.59,265.27L267.59,265.27L267.59,265.59L267.59,265.60L267.58,265.91L267.57,265.91L267.56,266.22L267.56,266.22L267.53,266.52L267.53,266.53L267.49,266.82L267.49,266.83L267.45,267.11L267.45,267.12L267.40,267.39L267.40,267.40L267.34,267.67L267.34,267.68L267.27,267.94L267.27,267.94L267.20,268.20L267.20,268.21L267.12,268.46L267.11,268.46L267.02,268.72L267.02,268.72L266.92,268.97L266.92,268.98L266.81,269.22L266.81,269.23L266.69,269.47L266.69,269.48L266.57,269.72L266.56,269.73L266.43,269.97L266.43,269.97L266.28,270.21L266.28,270.22L266.13,270.46L266.13,270.46L265.97,270.70L265.96,270.70L265.79,270.95L265.79,270.95L265.59,271.21L265.59,271.21L265.38,271.50L265.38,271.50L265.15,271.80L265.14,271.80L264.89,272.11L264.89,272.11L264.62,272.45L264.62,272.45L264.33,272.80L264.33,272.80L264.02,273.17L264.02,273.17L263.69,273.56L263.69,273.56L263.34,273.96L263.18,274.16L263.01,274.36L262.84,274.56L262.67,274.77L262.49,274.98L262.31,275.20L262.13,275.42L261.95,275.65L261.76,275.88L261.60,276.08L261.60,278.35ZM278.05,277.06L278.05,260.96L276.85,260.96L273.21,263.78L273.21,264.59L275.28,263.69L275.34,263.68L275.40,263.69L275.45,263.72L275.48,263.77L275.49,263.83L275.49,277.06L275.48,277.11L275.46,277.16L275.41,277.19L275.36,277.21L273.20,277.51L273.20,278.35L280.35,278.35L280.35,277.51L278.18,277.21L278.13,277.19L278.08,277.16L278.06,277.11Z" fill="#605e55" stroke="#181816" stroke-width="0.8" stroke-linejoin="round" fill-rule="evenodd"/></svg>
</body></html>
